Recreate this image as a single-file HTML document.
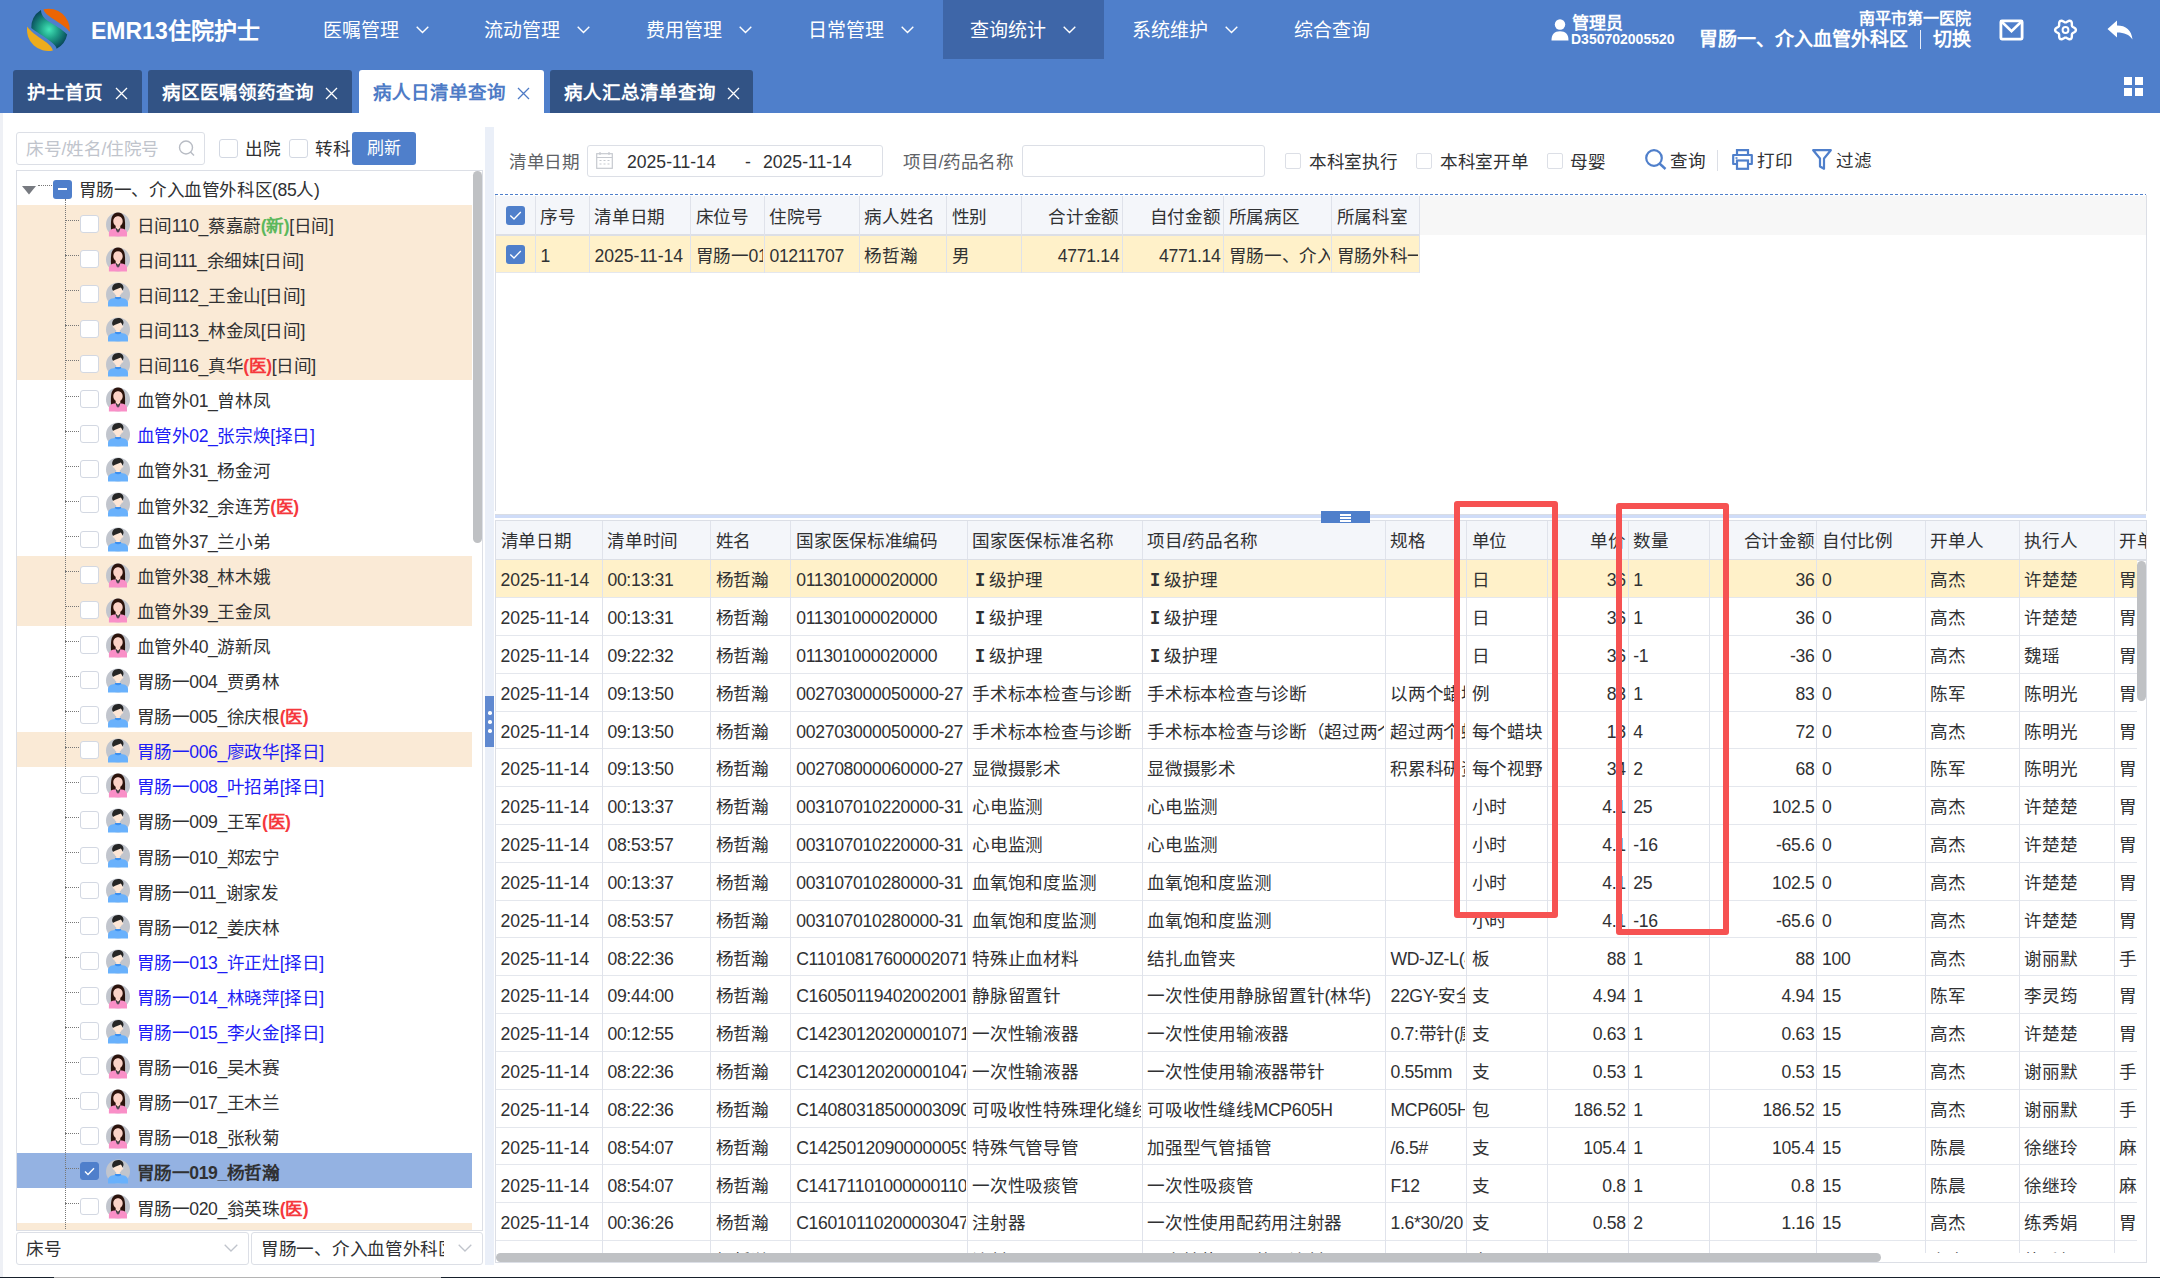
<!DOCTYPE html>
<html lang="zh-CN"><head><meta charset="utf-8"><title>EMR13</title><style>
*{box-sizing:border-box;margin:0;padding:0}
html,body{width:2160px;height:1278px;overflow:hidden;background:#fff}
body{position:relative;font-family:"Liberation Sans",sans-serif;color:#303133}
.a{position:absolute}
.nw{white-space:nowrap}
#top{left:0;top:0;width:2160px;height:113px;background:#4f7fcb}
.mi{top:0;height:58.5px;width:161px;color:#fff;font-size:19px;line-height:62px;padding-left:27px;white-space:nowrap}
.mi svg{position:absolute;top:26px}
.tab{top:70px;height:43px;border-radius:3px 3px 0 0;background:#325385;color:#fff;font-weight:bold;font-size:18.5px;line-height:45px;white-space:nowrap}
.tab .tx{position:absolute;top:0}
.tab svg{position:absolute;top:17px}
.cb{border:1px solid #d3d8e2;border-radius:3px;background:#fff}
.t18{font-size:17.6px;letter-spacing:-0.3px;line-height:22px;white-space:nowrap}
.tr{left:17px;width:455px;height:35.1px}
.tr .hl{position:absolute;left:48px;width:14px;top:15px;height:0;border-top:1px dotted #777;z-index:2}
.tr .cb{position:absolute;left:63px;top:9.8px;width:18.5px;height:17.8px}
.tr svg{position:absolute;left:89px;top:6.5px}
.tr .nm{position:absolute;left:119.5px;top:9.8px;font-size:17.6px;letter-spacing:-0.4px;line-height:23px;white-space:nowrap}
.org{background:#faead6}
.sel{background:#94b2e2}
.bl{color:#1d1df5}
.rd{color:#f5383d;font-weight:bold}
.gr{color:#5cb85c;font-weight:bold}
.cell{position:absolute;top:0;height:100%;overflow:hidden;white-space:nowrap;font-size:18px;padding-left:5px;padding-right:3px;border-right:1px solid #e0e3eb}
.r{text-align:right}
.rn{font-family:"Liberation Mono",monospace;font-weight:bold;font-size:20px;line-height:20px;transform:scaleX(0.85);display:inline-block;width:17px;padding-left:2px;letter-spacing:0}
</style></head>
<body><svg width="0" height="0" style="position:absolute"><defs>
<symbol id="avf" viewBox="0 0 24 25"><circle cx="12" cy="12.5" r="12" fill="#c1c5cd"/>
<path d="M5 18.5 C4.8 13 4.8 8 5.8 5 C7 2 9.5 0.6 12 0.6 C14.5 0.6 17 2 18.2 5 C19.2 8 19.2 13 19 18.5 Z" fill="#2b130c"/>
<path d="M7.3 9.5 C7.3 6.5 9.2 4.3 12 4.3 C14.8 4.3 16.7 6.5 16.7 9.5 C16.7 11.8 15.2 13.2 14.3 13.8 L14.3 17.5 L9.7 17.5 L9.7 13.8 C8.8 13.2 7.3 11.8 7.3 9.5 Z" fill="#fcd3c7"/>
<path d="M2.9 24.5 V21 C2.9 18.8 5 16.8 8 16.6 L10 16.4 L12 19.5 L14 16.4 L16 16.6 C19 16.8 21 18.8 21 21 V24.5 Z" fill="#f98fc7"/>
<path d="M9.6 16.2 L10.4 16 L12 19 L11.2 20.8 Z M14.4 16.2 L13.6 16 L12 19 L12.8 20.8 Z" fill="#2a3437"/></symbol>
<symbol id="avm" viewBox="0 0 24 25"><circle cx="12" cy="12.5" r="12" fill="#c1c5cd"/>
<circle cx="7.8" cy="9.6" r="1.1" fill="#fde6d6"/><circle cx="16.2" cy="9.6" r="1.1" fill="#fde6d6"/>
<path d="M7.8 8.5 C7.8 5.5 9.5 4 12 4 C14.5 4 16.2 5.5 16.2 8.5 C16.2 11.2 14.8 12.8 13.8 13.3 L13.8 15.5 L10.2 15.5 L10.2 13.3 C9.2 12.8 7.8 11.2 7.8 8.5 Z" fill="#fde6d6"/>
<path d="M6.2 7.2 C5.8 3.8 8.3 0.9 12.2 0.9 C15.2 0.9 17.6 2.6 17.5 5.6 C17.4 7 17 7.8 16.4 8.5 C16.1 7.2 15.6 6.2 14.8 5.6 C12.5 6.8 9.6 7.3 7.4 8.8 C6.8 8.4 6.4 7.9 6.2 7.2 Z" fill="#252525"/>
<path d="M2 24.5 V21 C2 18 4.8 16 8.8 15.9 L15.2 15.9 C19.2 16 22 18 22 21 V24.5 Z" fill="#69b1fc"/>
<path d="M8.9 15 L15.1 15 L15.1 16.3 C13.2 17.6 10.8 17.6 8.9 16.3 Z" fill="#3c90f0"/></symbol>
</defs></svg>
<div id="top" class="a"></div><svg class="a" style="left:22px;top:4px" width="54" height="52" viewBox="0 0 54 52">
<defs><radialGradient id="lg" gradientUnits="userSpaceOnUse" cx="27" cy="25.5" r="20"><stop offset="0" stop-color="#44e6b8"/><stop offset="0.45" stop-color="#1fa088"/><stop offset="1" stop-color="#08475a"/></radialGradient></defs>
<path d="M21.6 5.3 A21 21 0 0 1 47.6 27.7 C43 22 34 17 27 12 C23.5 9.5 22 7.5 21.6 5.3 Z" fill="#ec6504"/>
<path d="M5.3 22.4 A21 21 0 0 0 30.9 46.4 C30 43 27 40 21 36 C14 31 8 27 5.3 22.4 Z" fill="#eeac1c"/>
<path d="M18.9 5.9 A21 21 0 0 0 9.3 24 C14 28 22 32 28 37 C32 40 34.5 42.5 34.6 44.8 A21 21 0 0 0 45.2 30.5 C40 25 32 21 26 17 C21.5 14 19 10 18.9 5.9 Z" fill="url(#lg)"/>
</svg><div class="a nw" style="left:91px;top:16px;font-size:23px;line-height:30px;font-weight:bold;color:#fff">EMR13住院护士</div><div class="a mi" style="left:295.5px;">医嘱管理<svg width="13" height="8" viewBox="0 0 13 8" style="left:120px"><path d="M0.7 0.7 L6.5 6.6 L12.3 0.7" fill="none" stroke="#fff" stroke-width="1.4"/></svg></div><div class="a mi" style="left:457.4px;">流动管理<svg width="13" height="8" viewBox="0 0 13 8" style="left:120px"><path d="M0.7 0.7 L6.5 6.6 L12.3 0.7" fill="none" stroke="#fff" stroke-width="1.4"/></svg></div><div class="a mi" style="left:619.3px;">费用管理<svg width="13" height="8" viewBox="0 0 13 8" style="left:120px"><path d="M0.7 0.7 L6.5 6.6 L12.3 0.7" fill="none" stroke="#fff" stroke-width="1.4"/></svg></div><div class="a mi" style="left:781.2px;">日常管理<svg width="13" height="8" viewBox="0 0 13 8" style="left:120px"><path d="M0.7 0.7 L6.5 6.6 L12.3 0.7" fill="none" stroke="#fff" stroke-width="1.4"/></svg></div><div class="a mi" style="left:943.1px;background:#3e66a8;">查询统计<svg width="13" height="8" viewBox="0 0 13 8" style="left:120px"><path d="M0.7 0.7 L6.5 6.6 L12.3 0.7" fill="none" stroke="#fff" stroke-width="1.4"/></svg></div><div class="a mi" style="left:1105.0px;">系统维护<svg width="13" height="8" viewBox="0 0 13 8" style="left:120px"><path d="M0.7 0.7 L6.5 6.6 L12.3 0.7" fill="none" stroke="#fff" stroke-width="1.4"/></svg></div><div class="a mi" style="left:1266.9px;">综合查询</div><svg class="a" style="left:1551px;top:19px" width="18" height="22" viewBox="0 0 18 22"><circle cx="9" cy="5.5" r="5.2" fill="#fff"/><path d="M0.5 21.5 C0.5 15 3.5 12.2 9 12.2 C14.5 12.2 17.5 15 17.5 21.5 Z" fill="#fff"/></svg><div class="a nw" style="left:1572px;top:14px;font-size:17px;line-height:20px;font-weight:bold;color:#fff">管理员</div><div class="a nw" style="left:1571px;top:31px;font-size:14px;line-height:17px;font-weight:bold;color:#fff">D350702005520</div><div class="a nw" style="left:1700px;top:9px;width:271px;text-align:right;font-size:16px;line-height:20px;font-weight:bold;color:#fff">南平市第一医院</div><div class="a nw" style="left:1699px;top:28px;font-size:19px;line-height:23px;font-weight:bold;color:#fff">胃肠一、介入血管外科区</div><div class="a" style="left:1920px;top:30px;width:1px;height:19px;background:#e8eefa"></div><div class="a nw" style="left:1933px;top:28px;font-size:19px;line-height:23px;font-weight:bold;color:#fff">切换</div><svg class="a" style="left:1999px;top:19px" width="25" height="22" viewBox="0 0 25 22"><rect x="1.9" y="1.9" width="21.2" height="18.2" rx="1" fill="none" stroke="#fff" stroke-width="2.8"/><path d="M3 3 L12.5 12.3 L22 3" fill="none" stroke="#fff" stroke-width="2.6"/></svg><svg class="a" style="left:2053px;top:18px" width="25" height="24" viewBox="0 0 25 24"><path d="M22.90 12.00 L22.77 12.67 L22.40 13.30 L21.85 13.86 L21.19 14.33 L20.52 14.72 L19.90 15.07 L19.41 15.41 L19.08 15.80 L18.91 16.28 L18.85 16.88 L18.86 17.58 L18.86 18.36 L18.79 19.17 L18.58 19.93 L18.22 20.56 L17.70 21.01 L17.05 21.23 L16.32 21.23 L15.57 21.03 L14.83 20.69 L14.15 20.30 L13.55 19.94 L13.00 19.69 L12.50 19.60 L12.00 19.69 L11.45 19.94 L10.85 20.30 L10.17 20.69 L9.43 21.03 L8.68 21.23 L7.95 21.23 L7.30 21.01 L6.78 20.56 L6.42 19.93 L6.21 19.17 L6.14 18.36 L6.14 17.58 L6.15 16.88 L6.09 16.28 L5.92 15.80 L5.59 15.41 L5.10 15.07 L4.48 14.72 L3.81 14.33 L3.15 13.86 L2.60 13.30 L2.23 12.67 L2.10 12.00 L2.23 11.33 L2.60 10.70 L3.15 10.14 L3.81 9.67 L4.48 9.28 L5.10 8.93 L5.59 8.59 L5.92 8.20 L6.09 7.72 L6.15 7.12 L6.14 6.42 L6.14 5.64 L6.21 4.83 L6.42 4.07 L6.78 3.44 L7.30 2.99 L7.95 2.77 L8.68 2.77 L9.43 2.97 L10.17 3.31 L10.85 3.70 L11.45 4.06 L12.00 4.31 L12.50 4.40 L13.00 4.31 L13.55 4.06 L14.15 3.70 L14.83 3.31 L15.57 2.97 L16.32 2.77 L17.05 2.77 L17.70 2.99 L18.22 3.44 L18.58 4.07 L18.79 4.83 L18.86 5.64 L18.86 6.42 L18.85 7.12 L18.91 7.72 L19.08 8.20 L19.41 8.59 L19.90 8.93 L20.52 9.28 L21.19 9.67 L21.85 10.14 L22.40 10.70 L22.77 11.33 Z" fill="none" stroke="#fff" stroke-width="2.4" stroke-linejoin="round"/><circle cx="12.5" cy="12" r="2.9" fill="none" stroke="#fff" stroke-width="2"/></svg><svg class="a" style="left:2107px;top:20px" width="26" height="20" viewBox="0 0 26 20"><path d="M0.5 9 L10 0.5 L10 5.5 C19 5.5 24.5 10 25.5 19.5 C22 14.5 17.5 12.5 10 12.5 L10 17.5 Z" fill="#fff"/></svg><div class="a tab" style="left:13.3px;width:128.4px;"><span class="tx" style="left:14px">护士首页</span><svg width="13" height="13" viewBox="0 0 13 13" style="left:102px"><path d="M1 1 L12 12 M12 1 L1 12" stroke="#fff" stroke-width="1.3"/></svg></div><div class="a tab" style="left:148.3px;width:203.4px;"><span class="tx" style="left:13.4px">病区医嘱领药查询</span><svg width="13" height="13" viewBox="0 0 13 13" style="left:177px"><path d="M1 1 L12 12 M12 1 L1 12" stroke="#fff" stroke-width="1.3"/></svg></div><div class="a tab" style="left:359.3px;width:184.7px;background:#fff;color:#4e7bc6;"><span class="tx" style="left:13.4px">病人日清单查询</span><svg width="13" height="13" viewBox="0 0 13 13" style="left:158px"><path d="M1 1 L12 12 M12 1 L1 12" stroke="#4e7bc6" stroke-width="1.3"/></svg></div><div class="a tab" style="left:550px;width:203.3px;"><span class="tx" style="left:14px">病人汇总清单查询</span><svg width="13" height="13" viewBox="0 0 13 13" style="left:177px"><path d="M1 1 L12 12 M12 1 L1 12" stroke="#fff" stroke-width="1.3"/></svg></div><svg class="a" style="left:2124px;top:77px" width="19" height="19" viewBox="0 0 19 19"><rect x="0" y="0" width="8" height="8" fill="#fff"/><rect x="11" y="0" width="8" height="8" fill="#fff"/><rect x="0" y="11" width="8" height="8" fill="#fff"/><rect x="11" y="11" width="8" height="8" fill="#fff"/></svg><div class="a" style="left:0;top:113px;width:3px;height:1165px;background:#eef0f5"></div><div class="a" style="left:16px;top:132px;width:188.5px;height:32.5px;border:1px solid #dcdfe6;border-radius:3px"></div><div class="a t18" style="left:26px;top:138px;color:#c0c4cc">床号/姓名/住院号</div><svg class="a" style="left:178px;top:140px" width="18" height="17" viewBox="0 0 18 17"><circle cx="8" cy="7.5" r="6.5" fill="none" stroke="#b8bcc4" stroke-width="1.4"/><path d="M12.5 12 L16 15.5" stroke="#b8bcc4" stroke-width="1.4"/></svg><div class="a cb" style="left:219px;top:139px;width:19px;height:19px"></div><div class="a t18" style="left:245px;top:138px">出院</div><div class="a cb" style="left:289px;top:139px;width:19px;height:19px"></div><div class="a t18" style="left:315px;top:138px">转科</div><div class="a" style="left:352px;top:132px;width:64px;height:33px;background:#4f7fcb;border-radius:3px;color:#fff;font-size:17px;line-height:33px;text-align:center">刷新</div><div class="a" style="left:16px;top:170px;width:467px;height:1061px;border:1px solid #dcdfe6;overflow:hidden"><svg class="a" style="left:5px;top:15px" width="14" height="9" viewBox="0 0 14 9"><path d="M0 0 L14 0 L7 8.5 Z" fill="#777a80"/></svg><div class="a" style="left:21px;top:14px;width:14px;border-top:1px dotted #777"></div><div class="a" style="left:36px;top:9px;width:19px;height:18.5px;background:#4f7fcb;border-radius:3px"><div class="a" style="left:5px;top:8px;width:9px;height:2px;background:#fff"></div></div><div class="a nw" style="left:61.5px;top:8px;font-size:17.6px;letter-spacing:-0.4px;line-height:23px">胃肠一、介入血管外科区(85人)</div><div class="a" style="left:48px;top:28px;height:1040px;border-left:1px dotted #777;z-index:3"></div><div class="a tr org" style="left:0;top:34.00px"><div class="hl"></div><div class="cb"></div><svg width="24" height="25"><use href="#avf"/></svg><div class="nm" style="">日间110_蔡嘉蔚<span class="gr">(新)</span>[日间]</div></div><div class="a tr org" style="left:0;top:69.10px"><div class="hl"></div><div class="cb"></div><svg width="24" height="25"><use href="#avf"/></svg><div class="nm" style="">日间111_余细妹[日间]</div></div><div class="a tr org" style="left:0;top:104.20px"><div class="hl"></div><div class="cb"></div><svg width="24" height="25"><use href="#avm"/></svg><div class="nm" style="">日间112_王金山[日间]</div></div><div class="a tr org" style="left:0;top:139.30px"><div class="hl"></div><div class="cb"></div><svg width="24" height="25"><use href="#avm"/></svg><div class="nm" style="">日间113_林金凤[日间]</div></div><div class="a tr org" style="left:0;top:174.40px"><div class="hl"></div><div class="cb"></div><svg width="24" height="25"><use href="#avm"/></svg><div class="nm" style="">日间116_真华<span class="rd">(医)</span>[日间]</div></div><div class="a tr " style="left:0;top:209.50px"><div class="hl"></div><div class="cb"></div><svg width="24" height="25"><use href="#avf"/></svg><div class="nm" style="">血管外01_曾林凤</div></div><div class="a tr " style="left:0;top:244.60px"><div class="hl"></div><div class="cb"></div><svg width="24" height="25"><use href="#avm"/></svg><div class="nm" style=""><span class="bl">血管外02_张宗焕[择日]</span></div></div><div class="a tr " style="left:0;top:279.70px"><div class="hl"></div><div class="cb"></div><svg width="24" height="25"><use href="#avm"/></svg><div class="nm" style="">血管外31_杨金河</div></div><div class="a tr " style="left:0;top:314.80px"><div class="hl"></div><div class="cb"></div><svg width="24" height="25"><use href="#avm"/></svg><div class="nm" style="">血管外32_余连芳<span class="rd">(医)</span></div></div><div class="a tr " style="left:0;top:349.90px"><div class="hl"></div><div class="cb"></div><svg width="24" height="25"><use href="#avm"/></svg><div class="nm" style="">血管外37_兰小弟</div></div><div class="a tr org" style="left:0;top:385.00px"><div class="hl"></div><div class="cb"></div><svg width="24" height="25"><use href="#avf"/></svg><div class="nm" style="">血管外38_林木娥</div></div><div class="a tr org" style="left:0;top:420.10px"><div class="hl"></div><div class="cb"></div><svg width="24" height="25"><use href="#avf"/></svg><div class="nm" style="">血管外39_王金凤</div></div><div class="a tr " style="left:0;top:455.20px"><div class="hl"></div><div class="cb"></div><svg width="24" height="25"><use href="#avf"/></svg><div class="nm" style="">血管外40_游新凤</div></div><div class="a tr " style="left:0;top:490.30px"><div class="hl"></div><div class="cb"></div><svg width="24" height="25"><use href="#avm"/></svg><div class="nm" style="">胃肠一004_贾勇林</div></div><div class="a tr " style="left:0;top:525.40px"><div class="hl"></div><div class="cb"></div><svg width="24" height="25"><use href="#avm"/></svg><div class="nm" style="">胃肠一005_徐庆根<span class="rd">(医)</span></div></div><div class="a tr org" style="left:0;top:560.50px"><div class="hl"></div><div class="cb"></div><svg width="24" height="25"><use href="#avm"/></svg><div class="nm" style=""><span class="bl">胃肠一006_廖政华[择日]</span></div></div><div class="a tr " style="left:0;top:595.60px"><div class="hl"></div><div class="cb"></div><svg width="24" height="25"><use href="#avf"/></svg><div class="nm" style=""><span class="bl">胃肠一008_叶招弟[择日]</span></div></div><div class="a tr " style="left:0;top:630.70px"><div class="hl"></div><div class="cb"></div><svg width="24" height="25"><use href="#avm"/></svg><div class="nm" style="">胃肠一009_王军<span class="rd">(医)</span></div></div><div class="a tr " style="left:0;top:665.80px"><div class="hl"></div><div class="cb"></div><svg width="24" height="25"><use href="#avm"/></svg><div class="nm" style="">胃肠一010_郑宏宁</div></div><div class="a tr " style="left:0;top:700.90px"><div class="hl"></div><div class="cb"></div><svg width="24" height="25"><use href="#avm"/></svg><div class="nm" style="">胃肠一011_谢家发</div></div><div class="a tr " style="left:0;top:736.00px"><div class="hl"></div><div class="cb"></div><svg width="24" height="25"><use href="#avm"/></svg><div class="nm" style="">胃肠一012_姜庆林</div></div><div class="a tr " style="left:0;top:771.10px"><div class="hl"></div><div class="cb"></div><svg width="24" height="25"><use href="#avm"/></svg><div class="nm" style=""><span class="bl">胃肠一013_许正灶[择日]</span></div></div><div class="a tr " style="left:0;top:806.20px"><div class="hl"></div><div class="cb"></div><svg width="24" height="25"><use href="#avf"/></svg><div class="nm" style=""><span class="bl">胃肠一014_林晓萍[择日]</span></div></div><div class="a tr " style="left:0;top:841.30px"><div class="hl"></div><div class="cb"></div><svg width="24" height="25"><use href="#avm"/></svg><div class="nm" style=""><span class="bl">胃肠一015_李火金[择日]</span></div></div><div class="a tr " style="left:0;top:876.40px"><div class="hl"></div><div class="cb"></div><svg width="24" height="25"><use href="#avf"/></svg><div class="nm" style="">胃肠一016_吴木赛</div></div><div class="a tr " style="left:0;top:911.50px"><div class="hl"></div><div class="cb"></div><svg width="24" height="25"><use href="#avf"/></svg><div class="nm" style="">胃肠一017_王木兰</div></div><div class="a tr " style="left:0;top:946.60px"><div class="hl"></div><div class="cb"></div><svg width="24" height="25"><use href="#avf"/></svg><div class="nm" style="">胃肠一018_张秋菊</div></div><div class="a tr sel" style="left:0;top:981.70px"><div class="hl"></div><div class="cb" style="background:#4f7fcb;border-color:#4f7fcb"><svg style="position:absolute;left:3px;top:4px" width="11" height="9" viewBox="0 0 11 9"><path d="M1 4.5 L4 7.5 L10 1.2" fill="none" stroke="#fff" stroke-width="1.4"/></svg></div><svg width="24" height="25"><use href="#avm"/></svg><div class="nm" style="font-weight:bold;">胃肠一019_杨哲瀚</div></div><div class="a tr " style="left:0;top:1016.80px"><div class="hl"></div><div class="cb"></div><svg width="24" height="25"><use href="#avf"/></svg><div class="nm" style="">胃肠一020_翁英珠<span class="rd">(医)</span></div></div><div class="a tr org" style="left:0;top:1051.90px"></div><div class="a" style="left:456px;top:0px;width:9px;height:372px;background:#bfc1c4;border-radius:5px"></div></div><div class="a" style="left:16px;top:1232px;width:233px;height:33px;border:1px solid #dcdfe6;border-radius:3px"></div><div class="a t18" style="left:26px;top:1238px">床号</div><svg class="a" style="left:224px;top:1244px" width="14" height="8" viewBox="0 0 14 8"><path d="M0.7 0.7 L7 7 L13.3 0.7" fill="none" stroke="#c0c4cc" stroke-width="1.3"/></svg><div class="a" style="left:251px;top:1232px;width:232px;height:33px;border:1px solid #dcdfe6;border-radius:3px"></div><div class="a t18" style="left:261px;top:1238px;width:183px;overflow:hidden">胃肠一、介入血管外科区</div><svg class="a" style="left:458px;top:1244px" width="14" height="8" viewBox="0 0 14 8"><path d="M0.7 0.7 L7 7 L13.3 0.7" fill="none" stroke="#c0c4cc" stroke-width="1.3"/></svg><div class="a" style="left:485px;top:127px;width:9px;height:1138px;background:#eaeff8"></div><div class="a" style="left:485px;top:696px;width:9px;height:51px;background:#6089d0"><div class="a" style="left:3px;top:15px;width:3.5px;height:3.5px;border-radius:50%;background:#fff"></div><div class="a" style="left:3px;top:24px;width:3.5px;height:3.5px;border-radius:50%;background:#fff"></div><div class="a" style="left:3px;top:33px;width:3.5px;height:3.5px;border-radius:50%;background:#fff"></div></div><div class="a t18" style="left:509px;top:151px;color:#606266">清单日期</div><div class="a" style="left:587px;top:144.5px;width:295.5px;height:32px;border:1px solid #dcdfe6;border-radius:3px"></div><svg class="a" style="left:596px;top:152px" width="17" height="17" viewBox="0 0 17 17"><rect x="0.7" y="1.7" width="15.6" height="14.6" fill="none" stroke="#c6c9cf" stroke-width="1.2"/><path d="M0.7 5.5 H16.3 M4 0 V3 M13 0 V3" stroke="#c6c9cf" stroke-width="1.2"/><path d="M3.5 8.5h2M7.5 8.5h2M11.5 8.5h2M3.5 12h2M7.5 12h2M11.5 12h2" stroke="#c6c9cf" stroke-width="1.2"/></svg><div class="a t18" style="left:627px;top:151px;letter-spacing:0">2025-11-14</div><div class="a t18" style="left:745px;top:151px">-</div><div class="a t18" style="left:763px;top:151px;letter-spacing:0">2025-11-14</div><div class="a t18" style="left:903px;top:151px;color:#606266">项目/药品名称</div><div class="a" style="left:1022px;top:144.5px;width:242.5px;height:32px;border:1px solid #dcdfe6;border-radius:3px"></div><div class="a cb" style="left:1285px;top:153px;width:16px;height:16px;border-color:#dcdfe6;border-radius:2px"></div><div class="a t18" style="left:1309px;top:151px">本科室执行</div><div class="a cb" style="left:1416px;top:153px;width:16px;height:16px;border-color:#dcdfe6;border-radius:2px"></div><div class="a t18" style="left:1440px;top:151px">本科室开单</div><div class="a cb" style="left:1547px;top:153px;width:16px;height:16px;border-color:#dcdfe6;border-radius:2px"></div><div class="a t18" style="left:1570px;top:151px">母婴</div><svg class="a" style="left:1645px;top:149px" width="22" height="21" viewBox="0 0 22 21"><circle cx="9" cy="9" r="7.8" fill="none" stroke="#4f7fcb" stroke-width="2.2"/><path d="M14.5 14.5 L20.5 20" stroke="#4f7fcb" stroke-width="2.4"/></svg><div class="a t18" style="left:1670px;top:150px">查询</div><div class="a" style="left:1717px;top:150px;width:1px;height:21px;background:#dcdfe6"></div><svg class="a" style="left:1732px;top:149px" width="21" height="21" viewBox="0 0 21 21"><path d="M5 6 V1.2 H16 V6" fill="none" stroke="#4f7fcb" stroke-width="2.2"/><path d="M5 15 H1.2 V6 H19.8 V15 H16" fill="none" stroke="#4f7fcb" stroke-width="2.2" stroke-linejoin="round"/><rect x="5" y="11.5" width="11" height="8.3" fill="none" stroke="#4f7fcb" stroke-width="2.2"/><rect x="3.5" y="8.2" width="2" height="1.6" fill="#4f7fcb"/></svg><div class="a t18" style="left:1757px;top:150px">打印</div><svg class="a" style="left:1812px;top:149px" width="20" height="21" viewBox="0 0 20 21"><path d="M1.2 1.2 H18.8 L12 9.5 V19.8 L8 17.5 V9.5 Z" fill="none" stroke="#4f7fcb" stroke-width="2.2" stroke-linejoin="round"/></svg><div class="a t18" style="left:1836px;top:150px">过滤</div><div class="a" style="left:495px;top:193.5px;width:1651px;height:1.5px;background:repeating-linear-gradient(90deg,#4f7fcb 0 3px,transparent 3px 5px)"></div><div class="a" style="left:495px;top:195px;width:1px;height:316px;background:#dcdfe6"></div><div class="a" style="left:2145.5px;top:195px;width:1px;height:316px;background:#dcdfe6"></div><div class="a" style="left:496px;top:195.5px;width:1650px;height:39px;background:#f7f7f7"></div><div class="a" style="left:496px;top:195.5px;width:923.2px;height:38.5px;background:#f4f6fa"></div><div class="a" style="left:496px;top:234px;width:923.2px;height:2px;background:#dcdfe6"></div><div class="a" style="left:496px;top:236px;width:923.2px;height:35.5px;background:#fff1c9"></div><div class="a" style="left:496px;top:271.5px;width:923.2px;height:1px;background:#e4e7ed"></div><div class="a" style="left:535.0px;top:195.5px;width:1px;height:77px;background:#dfe2ea"></div><div class="a" style="left:506px;top:206px;width:19px;height:19px;background:#4f7fcb;border-radius:3px"><svg style="position:absolute;left:3px;top:4px" width="13" height="11" viewBox="0 0 13 11"><path d="M1.3 5.5 L5 9 L11.8 2" fill="none" stroke="#fff" stroke-width="1.3"/></svg></div><div class="a" style="left:506px;top:245px;width:19px;height:19px;background:#4f7fcb;border-radius:3px"><svg style="position:absolute;left:3px;top:4px" width="13" height="11" viewBox="0 0 13 11"><path d="M1.3 5.5 L5 9 L11.8 2" fill="none" stroke="#fff" stroke-width="1.3"/></svg></div><div class="a" style="left:589.0px;top:195.5px;width:1px;height:77px;background:#dfe2ea"></div><div class="a nw" style="left:535.4px;top:205.5px;width:53.0px;padding-left:5px;font-size:17.6px;letter-spacing:-0.3px;line-height:22px;overflow:hidden">序号</div><div class="a nw" style="left:535.4px;top:244.7px;width:53.0px;padding-left:5px;font-size:17.6px;letter-spacing:-0.3px;line-height:22px;overflow:hidden">1</div><div class="a" style="left:690.1px;top:195.5px;width:1px;height:77px;background:#dfe2ea"></div><div class="a nw" style="left:589.4px;top:205.5px;width:100.1px;padding-left:5px;font-size:17.6px;letter-spacing:-0.3px;line-height:22px;overflow:hidden">清单日期</div><div class="a nw" style="left:589.4px;top:244.7px;width:100.1px;padding-left:5px;font-size:17.6px;letter-spacing:0;line-height:22px;overflow:hidden">2025-11-14</div><div class="a" style="left:764.0px;top:195.5px;width:1px;height:77px;background:#dfe2ea"></div><div class="a nw" style="left:690.5px;top:205.5px;width:72.9px;padding-left:5px;font-size:17.6px;letter-spacing:-0.3px;line-height:22px;overflow:hidden">床位号</div><div class="a nw" style="left:690.5px;top:244.7px;width:72.9px;padding-left:5px;font-size:17.6px;letter-spacing:-0.3px;line-height:22px;overflow:hidden">胃肠一01</div><div class="a" style="left:859.0px;top:195.5px;width:1px;height:77px;background:#dfe2ea"></div><div class="a nw" style="left:764.4px;top:205.5px;width:94.0px;padding-left:5px;font-size:17.6px;letter-spacing:-0.3px;line-height:22px;overflow:hidden">住院号</div><div class="a nw" style="left:764.4px;top:244.7px;width:94.0px;padding-left:5px;font-size:17.6px;letter-spacing:-0.3px;line-height:22px;overflow:hidden">01211707</div><div class="a" style="left:946.1px;top:195.5px;width:1px;height:77px;background:#dfe2ea"></div><div class="a nw" style="left:859.4px;top:205.5px;width:86.1px;padding-left:5px;font-size:17.6px;letter-spacing:-0.3px;line-height:22px;overflow:hidden">病人姓名</div><div class="a nw" style="left:859.4px;top:244.7px;width:86.1px;padding-left:5px;font-size:17.6px;letter-spacing:-0.3px;line-height:22px;overflow:hidden">杨哲瀚</div><div class="a" style="left:1020.9px;top:195.5px;width:1px;height:77px;background:#dfe2ea"></div><div class="a nw" style="left:946.5px;top:205.5px;width:73.8px;padding-left:5px;font-size:17.6px;letter-spacing:-0.3px;line-height:22px;overflow:hidden">性别</div><div class="a nw" style="left:946.5px;top:244.7px;width:73.8px;padding-left:5px;font-size:17.6px;letter-spacing:-0.3px;line-height:22px;overflow:hidden">男</div><div class="a" style="left:1121.8px;top:195.5px;width:1px;height:77px;background:#dfe2ea"></div><div class="a nw" style="left:1021.3px;top:205.5px;width:99.9px;padding-left:5px;text-align:right;padding-right:2px;font-size:17.6px;letter-spacing:-0.3px;line-height:22px;overflow:hidden">合计金额</div><div class="a nw" style="left:1021.3px;top:244.7px;width:99.9px;padding-left:5px;text-align:right;padding-right:2px;font-size:17.6px;letter-spacing:-0.3px;line-height:22px;overflow:hidden">4771.14</div><div class="a" style="left:1223.2px;top:195.5px;width:1px;height:77px;background:#dfe2ea"></div><div class="a nw" style="left:1122.2px;top:205.5px;width:100.4px;padding-left:5px;text-align:right;padding-right:2px;font-size:17.6px;letter-spacing:-0.3px;line-height:22px;overflow:hidden">自付金额</div><div class="a nw" style="left:1122.2px;top:244.7px;width:100.4px;padding-left:5px;text-align:right;padding-right:2px;font-size:17.6px;letter-spacing:-0.3px;line-height:22px;overflow:hidden">4771.14</div><div class="a" style="left:1331.1px;top:195.5px;width:1px;height:77px;background:#dfe2ea"></div><div class="a nw" style="left:1223.6px;top:205.5px;width:106.9px;padding-left:5px;font-size:17.6px;letter-spacing:-0.3px;line-height:22px;overflow:hidden">所属病区</div><div class="a nw" style="left:1223.6px;top:244.7px;width:106.9px;padding-left:5px;font-size:17.6px;letter-spacing:-0.3px;line-height:22px;overflow:hidden">胃肠一、介入</div><div class="a" style="left:1418.8px;top:195.5px;width:1px;height:77px;background:#dfe2ea"></div><div class="a nw" style="left:1331.5px;top:205.5px;width:86.7px;padding-left:5px;font-size:17.6px;letter-spacing:-0.3px;line-height:22px;overflow:hidden">所属科室</div><div class="a nw" style="left:1331.5px;top:244.7px;width:86.7px;padding-left:5px;font-size:17.6px;letter-spacing:-0.3px;line-height:22px;overflow:hidden">胃肠外科一</div><div class="a" style="left:495px;top:514px;width:1651px;height:1px;background:#d9dde5"></div><div class="a" style="left:495px;top:515px;width:1651px;height:3px;background:#cfdcf8"></div><div class="a" style="left:1321px;top:511px;width:49px;height:12px;background:#4f7fcb;z-index:5"><div class="a" style="left:19px;top:3px;width:11px;height:1.5px;background:#fff"></div><div class="a" style="left:19px;top:6px;width:11px;height:1.5px;background:#fff"></div><div class="a" style="left:19px;top:9px;width:11px;height:1.5px;background:#fff"></div></div><div class="a" style="left:495px;top:520px;width:1651.5px;height:743px;border:1px solid #dcdfe6;overflow:hidden"><div class="a" style="left:0;top:0;width:1650px;height:38px;background:#f4f6fa"></div><div class="a" style="left:0;top:38px;width:1650px;height:2px;background:#dcdfe6"></div><div class="a" style="left:0;top:39.3px;width:1641px;height:692.7px;overflow:hidden"><div class="a" style="left:0;top:0.00px;width:1641px;height:37.82px;background:#fff1c9;border-bottom:1px solid #e4e7ed"></div><div class="a" style="left:0;top:37.82px;width:1641px;height:37.82px;background:#fff;border-bottom:1px solid #e4e7ed"></div><div class="a" style="left:0;top:75.64px;width:1641px;height:37.82px;background:#fff;border-bottom:1px solid #e4e7ed"></div><div class="a" style="left:0;top:113.46px;width:1641px;height:37.82px;background:#fff;border-bottom:1px solid #e4e7ed"></div><div class="a" style="left:0;top:151.28px;width:1641px;height:37.82px;background:#fff;border-bottom:1px solid #e4e7ed"></div><div class="a" style="left:0;top:189.10px;width:1641px;height:37.82px;background:#fff;border-bottom:1px solid #e4e7ed"></div><div class="a" style="left:0;top:226.92px;width:1641px;height:37.82px;background:#fff;border-bottom:1px solid #e4e7ed"></div><div class="a" style="left:0;top:264.74px;width:1641px;height:37.82px;background:#fff;border-bottom:1px solid #e4e7ed"></div><div class="a" style="left:0;top:302.56px;width:1641px;height:37.82px;background:#fff;border-bottom:1px solid #e4e7ed"></div><div class="a" style="left:0;top:340.38px;width:1641px;height:37.82px;background:#fff;border-bottom:1px solid #e4e7ed"></div><div class="a" style="left:0;top:378.20px;width:1641px;height:37.82px;background:#fff;border-bottom:1px solid #e4e7ed"></div><div class="a" style="left:0;top:416.02px;width:1641px;height:37.82px;background:#fff;border-bottom:1px solid #e4e7ed"></div><div class="a" style="left:0;top:453.84px;width:1641px;height:37.82px;background:#fff;border-bottom:1px solid #e4e7ed"></div><div class="a" style="left:0;top:491.66px;width:1641px;height:37.82px;background:#fff;border-bottom:1px solid #e4e7ed"></div><div class="a" style="left:0;top:529.48px;width:1641px;height:37.82px;background:#fff;border-bottom:1px solid #e4e7ed"></div><div class="a" style="left:0;top:567.30px;width:1641px;height:37.82px;background:#fff;border-bottom:1px solid #e4e7ed"></div><div class="a" style="left:0;top:605.12px;width:1641px;height:37.82px;background:#fff;border-bottom:1px solid #e4e7ed"></div><div class="a" style="left:0;top:642.94px;width:1641px;height:37.82px;background:#fff;border-bottom:1px solid #e4e7ed"></div><div class="a" style="left:0;top:680.76px;width:1641px;height:37.82px;background:#fff;border-bottom:1px solid #e4e7ed"></div><div class="a" style="left:105.6px;top:0;width:1px;height:700px;background:#e0e3eb"></div><div class="a" style="left:213.8px;top:0;width:1px;height:700px;background:#e0e3eb"></div><div class="a" style="left:294.4px;top:0;width:1px;height:700px;background:#e0e3eb"></div><div class="a" style="left:470.6px;top:0;width:1px;height:700px;background:#e0e3eb"></div><div class="a" style="left:645.6px;top:0;width:1px;height:700px;background:#e0e3eb"></div><div class="a" style="left:888.6px;top:0;width:1px;height:700px;background:#e0e3eb"></div><div class="a" style="left:969.7px;top:0;width:1px;height:700px;background:#e0e3eb"></div><div class="a" style="left:1051.0px;top:0;width:1px;height:700px;background:#e0e3eb"></div><div class="a" style="left:1131.5px;top:0;width:1px;height:700px;background:#e0e3eb"></div><div class="a" style="left:1212.5px;top:0;width:1px;height:700px;background:#e0e3eb"></div><div class="a" style="left:1320.2px;top:0;width:1px;height:700px;background:#e0e3eb"></div><div class="a" style="left:1428.5px;top:0;width:1px;height:700px;background:#e0e3eb"></div><div class="a" style="left:1522.6px;top:0;width:1px;height:700px;background:#e0e3eb"></div><div class="a" style="left:1617.5px;top:0;width:1px;height:700px;background:#e0e3eb"></div><div class="a" style="left:1743.2px;top:0;width:1px;height:700px;background:#e0e3eb"></div><div class="a nw" style="left:-0.5px;top:9.10px;width:105.9px;padding-left:5px;font-size:17.6px;letter-spacing:0;line-height:22px;overflow:hidden">2025-11-14</div><div class="a nw" style="left:106.4px;top:9.10px;width:107.2px;padding-left:5px;font-size:17.6px;letter-spacing:-0.3px;line-height:22px;overflow:hidden">00:13:31</div><div class="a nw" style="left:214.6px;top:9.10px;width:79.6px;padding-left:5px;font-size:17.6px;letter-spacing:-0.3px;line-height:22px;overflow:hidden">杨哲瀚</div><div class="a nw" style="left:295.2px;top:9.10px;width:175.2px;padding-left:5px;font-size:17.6px;letter-spacing:-0.3px;line-height:22px;overflow:hidden">011301000020000</div><div class="a nw" style="left:471.4px;top:9.10px;width:174.0px;padding-left:5px;font-size:17.6px;letter-spacing:-0.3px;line-height:22px;overflow:hidden"><b class="rn">I</b>级护理</div><div class="a nw" style="left:646.4px;top:9.10px;width:242.0px;padding-left:5px;font-size:17.6px;letter-spacing:-0.3px;line-height:22px;overflow:hidden"><b class="rn">I</b>级护理</div><div class="a nw" style="left:889.4px;top:9.10px;width:80.1px;padding-left:5px;font-size:17.6px;letter-spacing:-0.3px;line-height:22px;overflow:hidden"></div><div class="a nw" style="left:970.5px;top:9.10px;width:80.3px;padding-left:5px;font-size:17.6px;letter-spacing:-0.3px;line-height:22px;overflow:hidden">日</div><div class="a nw" style="left:1051.8px;top:9.10px;width:79.5px;padding-left:5px;text-align:right;padding-right:1.5px;font-size:17.6px;letter-spacing:-0.3px;line-height:22px;overflow:hidden">36</div><div class="a nw" style="left:1132.3px;top:9.10px;width:80.0px;padding-left:5px;font-size:17.6px;letter-spacing:-0.3px;line-height:22px;overflow:hidden">1</div><div class="a nw" style="left:1213.3px;top:9.10px;width:106.7px;padding-left:5px;text-align:right;padding-right:1.5px;font-size:17.6px;letter-spacing:-0.3px;line-height:22px;overflow:hidden">36</div><div class="a nw" style="left:1321.0px;top:9.10px;width:107.3px;padding-left:5px;font-size:17.6px;letter-spacing:-0.3px;line-height:22px;overflow:hidden">0</div><div class="a nw" style="left:1429.3px;top:9.10px;width:93.1px;padding-left:5px;font-size:17.6px;letter-spacing:-0.3px;line-height:22px;overflow:hidden">高杰</div><div class="a nw" style="left:1523.4px;top:9.10px;width:93.9px;padding-left:5px;font-size:17.6px;letter-spacing:-0.3px;line-height:22px;overflow:hidden">许楚楚</div><div class="a nw" style="left:1618.3px;top:9.10px;width:124.7px;padding-left:5px;font-size:17.6px;letter-spacing:-0.3px;line-height:22px;overflow:hidden">胃</div><div class="a nw" style="left:-0.5px;top:46.92px;width:105.9px;padding-left:5px;font-size:17.6px;letter-spacing:0;line-height:22px;overflow:hidden">2025-11-14</div><div class="a nw" style="left:106.4px;top:46.92px;width:107.2px;padding-left:5px;font-size:17.6px;letter-spacing:-0.3px;line-height:22px;overflow:hidden">00:13:31</div><div class="a nw" style="left:214.6px;top:46.92px;width:79.6px;padding-left:5px;font-size:17.6px;letter-spacing:-0.3px;line-height:22px;overflow:hidden">杨哲瀚</div><div class="a nw" style="left:295.2px;top:46.92px;width:175.2px;padding-left:5px;font-size:17.6px;letter-spacing:-0.3px;line-height:22px;overflow:hidden">011301000020000</div><div class="a nw" style="left:471.4px;top:46.92px;width:174.0px;padding-left:5px;font-size:17.6px;letter-spacing:-0.3px;line-height:22px;overflow:hidden"><b class="rn">I</b>级护理</div><div class="a nw" style="left:646.4px;top:46.92px;width:242.0px;padding-left:5px;font-size:17.6px;letter-spacing:-0.3px;line-height:22px;overflow:hidden"><b class="rn">I</b>级护理</div><div class="a nw" style="left:889.4px;top:46.92px;width:80.1px;padding-left:5px;font-size:17.6px;letter-spacing:-0.3px;line-height:22px;overflow:hidden"></div><div class="a nw" style="left:970.5px;top:46.92px;width:80.3px;padding-left:5px;font-size:17.6px;letter-spacing:-0.3px;line-height:22px;overflow:hidden">日</div><div class="a nw" style="left:1051.8px;top:46.92px;width:79.5px;padding-left:5px;text-align:right;padding-right:1.5px;font-size:17.6px;letter-spacing:-0.3px;line-height:22px;overflow:hidden">36</div><div class="a nw" style="left:1132.3px;top:46.92px;width:80.0px;padding-left:5px;font-size:17.6px;letter-spacing:-0.3px;line-height:22px;overflow:hidden">1</div><div class="a nw" style="left:1213.3px;top:46.92px;width:106.7px;padding-left:5px;text-align:right;padding-right:1.5px;font-size:17.6px;letter-spacing:-0.3px;line-height:22px;overflow:hidden">36</div><div class="a nw" style="left:1321.0px;top:46.92px;width:107.3px;padding-left:5px;font-size:17.6px;letter-spacing:-0.3px;line-height:22px;overflow:hidden">0</div><div class="a nw" style="left:1429.3px;top:46.92px;width:93.1px;padding-left:5px;font-size:17.6px;letter-spacing:-0.3px;line-height:22px;overflow:hidden">高杰</div><div class="a nw" style="left:1523.4px;top:46.92px;width:93.9px;padding-left:5px;font-size:17.6px;letter-spacing:-0.3px;line-height:22px;overflow:hidden">许楚楚</div><div class="a nw" style="left:1618.3px;top:46.92px;width:124.7px;padding-left:5px;font-size:17.6px;letter-spacing:-0.3px;line-height:22px;overflow:hidden">胃</div><div class="a nw" style="left:-0.5px;top:84.74px;width:105.9px;padding-left:5px;font-size:17.6px;letter-spacing:0;line-height:22px;overflow:hidden">2025-11-14</div><div class="a nw" style="left:106.4px;top:84.74px;width:107.2px;padding-left:5px;font-size:17.6px;letter-spacing:-0.3px;line-height:22px;overflow:hidden">09:22:32</div><div class="a nw" style="left:214.6px;top:84.74px;width:79.6px;padding-left:5px;font-size:17.6px;letter-spacing:-0.3px;line-height:22px;overflow:hidden">杨哲瀚</div><div class="a nw" style="left:295.2px;top:84.74px;width:175.2px;padding-left:5px;font-size:17.6px;letter-spacing:-0.3px;line-height:22px;overflow:hidden">011301000020000</div><div class="a nw" style="left:471.4px;top:84.74px;width:174.0px;padding-left:5px;font-size:17.6px;letter-spacing:-0.3px;line-height:22px;overflow:hidden"><b class="rn">I</b>级护理</div><div class="a nw" style="left:646.4px;top:84.74px;width:242.0px;padding-left:5px;font-size:17.6px;letter-spacing:-0.3px;line-height:22px;overflow:hidden"><b class="rn">I</b>级护理</div><div class="a nw" style="left:889.4px;top:84.74px;width:80.1px;padding-left:5px;font-size:17.6px;letter-spacing:-0.3px;line-height:22px;overflow:hidden"></div><div class="a nw" style="left:970.5px;top:84.74px;width:80.3px;padding-left:5px;font-size:17.6px;letter-spacing:-0.3px;line-height:22px;overflow:hidden">日</div><div class="a nw" style="left:1051.8px;top:84.74px;width:79.5px;padding-left:5px;text-align:right;padding-right:1.5px;font-size:17.6px;letter-spacing:-0.3px;line-height:22px;overflow:hidden">36</div><div class="a nw" style="left:1132.3px;top:84.74px;width:80.0px;padding-left:5px;font-size:17.6px;letter-spacing:-0.3px;line-height:22px;overflow:hidden">-1</div><div class="a nw" style="left:1213.3px;top:84.74px;width:106.7px;padding-left:5px;text-align:right;padding-right:1.5px;font-size:17.6px;letter-spacing:-0.3px;line-height:22px;overflow:hidden">-36</div><div class="a nw" style="left:1321.0px;top:84.74px;width:107.3px;padding-left:5px;font-size:17.6px;letter-spacing:-0.3px;line-height:22px;overflow:hidden">0</div><div class="a nw" style="left:1429.3px;top:84.74px;width:93.1px;padding-left:5px;font-size:17.6px;letter-spacing:-0.3px;line-height:22px;overflow:hidden">高杰</div><div class="a nw" style="left:1523.4px;top:84.74px;width:93.9px;padding-left:5px;font-size:17.6px;letter-spacing:-0.3px;line-height:22px;overflow:hidden">魏瑶</div><div class="a nw" style="left:1618.3px;top:84.74px;width:124.7px;padding-left:5px;font-size:17.6px;letter-spacing:-0.3px;line-height:22px;overflow:hidden">胃</div><div class="a nw" style="left:-0.5px;top:122.56px;width:105.9px;padding-left:5px;font-size:17.6px;letter-spacing:0;line-height:22px;overflow:hidden">2025-11-14</div><div class="a nw" style="left:106.4px;top:122.56px;width:107.2px;padding-left:5px;font-size:17.6px;letter-spacing:-0.3px;line-height:22px;overflow:hidden">09:13:50</div><div class="a nw" style="left:214.6px;top:122.56px;width:79.6px;padding-left:5px;font-size:17.6px;letter-spacing:-0.3px;line-height:22px;overflow:hidden">杨哲瀚</div><div class="a nw" style="left:295.2px;top:122.56px;width:175.2px;padding-left:5px;font-size:17.6px;letter-spacing:-0.3px;line-height:22px;overflow:hidden">002703000050000-27</div><div class="a nw" style="left:471.4px;top:122.56px;width:174.0px;padding-left:5px;font-size:17.6px;letter-spacing:-0.3px;line-height:22px;overflow:hidden">手术标本检查与诊断</div><div class="a nw" style="left:646.4px;top:122.56px;width:242.0px;padding-left:5px;font-size:17.6px;letter-spacing:-0.3px;line-height:22px;overflow:hidden">手术标本检查与诊断</div><div class="a nw" style="left:889.4px;top:122.56px;width:80.1px;padding-left:5px;font-size:17.6px;letter-spacing:-0.3px;line-height:22px;overflow:hidden">以两个蜡块</div><div class="a nw" style="left:970.5px;top:122.56px;width:80.3px;padding-left:5px;font-size:17.6px;letter-spacing:-0.3px;line-height:22px;overflow:hidden">例</div><div class="a nw" style="left:1051.8px;top:122.56px;width:79.5px;padding-left:5px;text-align:right;padding-right:1.5px;font-size:17.6px;letter-spacing:-0.3px;line-height:22px;overflow:hidden">83</div><div class="a nw" style="left:1132.3px;top:122.56px;width:80.0px;padding-left:5px;font-size:17.6px;letter-spacing:-0.3px;line-height:22px;overflow:hidden">1</div><div class="a nw" style="left:1213.3px;top:122.56px;width:106.7px;padding-left:5px;text-align:right;padding-right:1.5px;font-size:17.6px;letter-spacing:-0.3px;line-height:22px;overflow:hidden">83</div><div class="a nw" style="left:1321.0px;top:122.56px;width:107.3px;padding-left:5px;font-size:17.6px;letter-spacing:-0.3px;line-height:22px;overflow:hidden">0</div><div class="a nw" style="left:1429.3px;top:122.56px;width:93.1px;padding-left:5px;font-size:17.6px;letter-spacing:-0.3px;line-height:22px;overflow:hidden">陈军</div><div class="a nw" style="left:1523.4px;top:122.56px;width:93.9px;padding-left:5px;font-size:17.6px;letter-spacing:-0.3px;line-height:22px;overflow:hidden">陈明光</div><div class="a nw" style="left:1618.3px;top:122.56px;width:124.7px;padding-left:5px;font-size:17.6px;letter-spacing:-0.3px;line-height:22px;overflow:hidden">胃</div><div class="a nw" style="left:-0.5px;top:160.38px;width:105.9px;padding-left:5px;font-size:17.6px;letter-spacing:0;line-height:22px;overflow:hidden">2025-11-14</div><div class="a nw" style="left:106.4px;top:160.38px;width:107.2px;padding-left:5px;font-size:17.6px;letter-spacing:-0.3px;line-height:22px;overflow:hidden">09:13:50</div><div class="a nw" style="left:214.6px;top:160.38px;width:79.6px;padding-left:5px;font-size:17.6px;letter-spacing:-0.3px;line-height:22px;overflow:hidden">杨哲瀚</div><div class="a nw" style="left:295.2px;top:160.38px;width:175.2px;padding-left:5px;font-size:17.6px;letter-spacing:-0.3px;line-height:22px;overflow:hidden">002703000050000-27</div><div class="a nw" style="left:471.4px;top:160.38px;width:174.0px;padding-left:5px;font-size:17.6px;letter-spacing:-0.3px;line-height:22px;overflow:hidden">手术标本检查与诊断</div><div class="a nw" style="left:646.4px;top:160.38px;width:242.0px;padding-left:5px;font-size:17.6px;letter-spacing:-0.3px;line-height:22px;overflow:hidden">手术标本检查与诊断（超过两个</div><div class="a nw" style="left:889.4px;top:160.38px;width:80.1px;padding-left:5px;font-size:17.6px;letter-spacing:-0.3px;line-height:22px;overflow:hidden">超过两个蜡块</div><div class="a nw" style="left:970.5px;top:160.38px;width:80.3px;padding-left:5px;font-size:17.6px;letter-spacing:-0.3px;line-height:22px;overflow:hidden">每个蜡块</div><div class="a nw" style="left:1051.8px;top:160.38px;width:79.5px;padding-left:5px;text-align:right;padding-right:1.5px;font-size:17.6px;letter-spacing:-0.3px;line-height:22px;overflow:hidden">18</div><div class="a nw" style="left:1132.3px;top:160.38px;width:80.0px;padding-left:5px;font-size:17.6px;letter-spacing:-0.3px;line-height:22px;overflow:hidden">4</div><div class="a nw" style="left:1213.3px;top:160.38px;width:106.7px;padding-left:5px;text-align:right;padding-right:1.5px;font-size:17.6px;letter-spacing:-0.3px;line-height:22px;overflow:hidden">72</div><div class="a nw" style="left:1321.0px;top:160.38px;width:107.3px;padding-left:5px;font-size:17.6px;letter-spacing:-0.3px;line-height:22px;overflow:hidden">0</div><div class="a nw" style="left:1429.3px;top:160.38px;width:93.1px;padding-left:5px;font-size:17.6px;letter-spacing:-0.3px;line-height:22px;overflow:hidden">高杰</div><div class="a nw" style="left:1523.4px;top:160.38px;width:93.9px;padding-left:5px;font-size:17.6px;letter-spacing:-0.3px;line-height:22px;overflow:hidden">陈明光</div><div class="a nw" style="left:1618.3px;top:160.38px;width:124.7px;padding-left:5px;font-size:17.6px;letter-spacing:-0.3px;line-height:22px;overflow:hidden">胃</div><div class="a nw" style="left:-0.5px;top:198.20px;width:105.9px;padding-left:5px;font-size:17.6px;letter-spacing:0;line-height:22px;overflow:hidden">2025-11-14</div><div class="a nw" style="left:106.4px;top:198.20px;width:107.2px;padding-left:5px;font-size:17.6px;letter-spacing:-0.3px;line-height:22px;overflow:hidden">09:13:50</div><div class="a nw" style="left:214.6px;top:198.20px;width:79.6px;padding-left:5px;font-size:17.6px;letter-spacing:-0.3px;line-height:22px;overflow:hidden">杨哲瀚</div><div class="a nw" style="left:295.2px;top:198.20px;width:175.2px;padding-left:5px;font-size:17.6px;letter-spacing:-0.3px;line-height:22px;overflow:hidden">002708000060000-27</div><div class="a nw" style="left:471.4px;top:198.20px;width:174.0px;padding-left:5px;font-size:17.6px;letter-spacing:-0.3px;line-height:22px;overflow:hidden">显微摄影术</div><div class="a nw" style="left:646.4px;top:198.20px;width:242.0px;padding-left:5px;font-size:17.6px;letter-spacing:-0.3px;line-height:22px;overflow:hidden">显微摄影术</div><div class="a nw" style="left:889.4px;top:198.20px;width:80.1px;padding-left:5px;font-size:17.6px;letter-spacing:-0.3px;line-height:22px;overflow:hidden">积累科研资料</div><div class="a nw" style="left:970.5px;top:198.20px;width:80.3px;padding-left:5px;font-size:17.6px;letter-spacing:-0.3px;line-height:22px;overflow:hidden">每个视野</div><div class="a nw" style="left:1051.8px;top:198.20px;width:79.5px;padding-left:5px;text-align:right;padding-right:1.5px;font-size:17.6px;letter-spacing:-0.3px;line-height:22px;overflow:hidden">34</div><div class="a nw" style="left:1132.3px;top:198.20px;width:80.0px;padding-left:5px;font-size:17.6px;letter-spacing:-0.3px;line-height:22px;overflow:hidden">2</div><div class="a nw" style="left:1213.3px;top:198.20px;width:106.7px;padding-left:5px;text-align:right;padding-right:1.5px;font-size:17.6px;letter-spacing:-0.3px;line-height:22px;overflow:hidden">68</div><div class="a nw" style="left:1321.0px;top:198.20px;width:107.3px;padding-left:5px;font-size:17.6px;letter-spacing:-0.3px;line-height:22px;overflow:hidden">0</div><div class="a nw" style="left:1429.3px;top:198.20px;width:93.1px;padding-left:5px;font-size:17.6px;letter-spacing:-0.3px;line-height:22px;overflow:hidden">陈军</div><div class="a nw" style="left:1523.4px;top:198.20px;width:93.9px;padding-left:5px;font-size:17.6px;letter-spacing:-0.3px;line-height:22px;overflow:hidden">陈明光</div><div class="a nw" style="left:1618.3px;top:198.20px;width:124.7px;padding-left:5px;font-size:17.6px;letter-spacing:-0.3px;line-height:22px;overflow:hidden">胃</div><div class="a nw" style="left:-0.5px;top:236.02px;width:105.9px;padding-left:5px;font-size:17.6px;letter-spacing:0;line-height:22px;overflow:hidden">2025-11-14</div><div class="a nw" style="left:106.4px;top:236.02px;width:107.2px;padding-left:5px;font-size:17.6px;letter-spacing:-0.3px;line-height:22px;overflow:hidden">00:13:37</div><div class="a nw" style="left:214.6px;top:236.02px;width:79.6px;padding-left:5px;font-size:17.6px;letter-spacing:-0.3px;line-height:22px;overflow:hidden">杨哲瀚</div><div class="a nw" style="left:295.2px;top:236.02px;width:175.2px;padding-left:5px;font-size:17.6px;letter-spacing:-0.3px;line-height:22px;overflow:hidden">003107010220000-31</div><div class="a nw" style="left:471.4px;top:236.02px;width:174.0px;padding-left:5px;font-size:17.6px;letter-spacing:-0.3px;line-height:22px;overflow:hidden">心电监测</div><div class="a nw" style="left:646.4px;top:236.02px;width:242.0px;padding-left:5px;font-size:17.6px;letter-spacing:-0.3px;line-height:22px;overflow:hidden">心电监测</div><div class="a nw" style="left:889.4px;top:236.02px;width:80.1px;padding-left:5px;font-size:17.6px;letter-spacing:-0.3px;line-height:22px;overflow:hidden"></div><div class="a nw" style="left:970.5px;top:236.02px;width:80.3px;padding-left:5px;font-size:17.6px;letter-spacing:-0.3px;line-height:22px;overflow:hidden">小时</div><div class="a nw" style="left:1051.8px;top:236.02px;width:79.5px;padding-left:5px;text-align:right;padding-right:1.5px;font-size:17.6px;letter-spacing:-0.3px;line-height:22px;overflow:hidden">4.1</div><div class="a nw" style="left:1132.3px;top:236.02px;width:80.0px;padding-left:5px;font-size:17.6px;letter-spacing:-0.3px;line-height:22px;overflow:hidden">25</div><div class="a nw" style="left:1213.3px;top:236.02px;width:106.7px;padding-left:5px;text-align:right;padding-right:1.5px;font-size:17.6px;letter-spacing:-0.3px;line-height:22px;overflow:hidden">102.5</div><div class="a nw" style="left:1321.0px;top:236.02px;width:107.3px;padding-left:5px;font-size:17.6px;letter-spacing:-0.3px;line-height:22px;overflow:hidden">0</div><div class="a nw" style="left:1429.3px;top:236.02px;width:93.1px;padding-left:5px;font-size:17.6px;letter-spacing:-0.3px;line-height:22px;overflow:hidden">高杰</div><div class="a nw" style="left:1523.4px;top:236.02px;width:93.9px;padding-left:5px;font-size:17.6px;letter-spacing:-0.3px;line-height:22px;overflow:hidden">许楚楚</div><div class="a nw" style="left:1618.3px;top:236.02px;width:124.7px;padding-left:5px;font-size:17.6px;letter-spacing:-0.3px;line-height:22px;overflow:hidden">胃</div><div class="a nw" style="left:-0.5px;top:273.84px;width:105.9px;padding-left:5px;font-size:17.6px;letter-spacing:0;line-height:22px;overflow:hidden">2025-11-14</div><div class="a nw" style="left:106.4px;top:273.84px;width:107.2px;padding-left:5px;font-size:17.6px;letter-spacing:-0.3px;line-height:22px;overflow:hidden">08:53:57</div><div class="a nw" style="left:214.6px;top:273.84px;width:79.6px;padding-left:5px;font-size:17.6px;letter-spacing:-0.3px;line-height:22px;overflow:hidden">杨哲瀚</div><div class="a nw" style="left:295.2px;top:273.84px;width:175.2px;padding-left:5px;font-size:17.6px;letter-spacing:-0.3px;line-height:22px;overflow:hidden">003107010220000-31</div><div class="a nw" style="left:471.4px;top:273.84px;width:174.0px;padding-left:5px;font-size:17.6px;letter-spacing:-0.3px;line-height:22px;overflow:hidden">心电监测</div><div class="a nw" style="left:646.4px;top:273.84px;width:242.0px;padding-left:5px;font-size:17.6px;letter-spacing:-0.3px;line-height:22px;overflow:hidden">心电监测</div><div class="a nw" style="left:889.4px;top:273.84px;width:80.1px;padding-left:5px;font-size:17.6px;letter-spacing:-0.3px;line-height:22px;overflow:hidden"></div><div class="a nw" style="left:970.5px;top:273.84px;width:80.3px;padding-left:5px;font-size:17.6px;letter-spacing:-0.3px;line-height:22px;overflow:hidden">小时</div><div class="a nw" style="left:1051.8px;top:273.84px;width:79.5px;padding-left:5px;text-align:right;padding-right:1.5px;font-size:17.6px;letter-spacing:-0.3px;line-height:22px;overflow:hidden">4.1</div><div class="a nw" style="left:1132.3px;top:273.84px;width:80.0px;padding-left:5px;font-size:17.6px;letter-spacing:-0.3px;line-height:22px;overflow:hidden">-16</div><div class="a nw" style="left:1213.3px;top:273.84px;width:106.7px;padding-left:5px;text-align:right;padding-right:1.5px;font-size:17.6px;letter-spacing:-0.3px;line-height:22px;overflow:hidden">-65.6</div><div class="a nw" style="left:1321.0px;top:273.84px;width:107.3px;padding-left:5px;font-size:17.6px;letter-spacing:-0.3px;line-height:22px;overflow:hidden">0</div><div class="a nw" style="left:1429.3px;top:273.84px;width:93.1px;padding-left:5px;font-size:17.6px;letter-spacing:-0.3px;line-height:22px;overflow:hidden">高杰</div><div class="a nw" style="left:1523.4px;top:273.84px;width:93.9px;padding-left:5px;font-size:17.6px;letter-spacing:-0.3px;line-height:22px;overflow:hidden">许楚楚</div><div class="a nw" style="left:1618.3px;top:273.84px;width:124.7px;padding-left:5px;font-size:17.6px;letter-spacing:-0.3px;line-height:22px;overflow:hidden">胃</div><div class="a nw" style="left:-0.5px;top:311.66px;width:105.9px;padding-left:5px;font-size:17.6px;letter-spacing:0;line-height:22px;overflow:hidden">2025-11-14</div><div class="a nw" style="left:106.4px;top:311.66px;width:107.2px;padding-left:5px;font-size:17.6px;letter-spacing:-0.3px;line-height:22px;overflow:hidden">00:13:37</div><div class="a nw" style="left:214.6px;top:311.66px;width:79.6px;padding-left:5px;font-size:17.6px;letter-spacing:-0.3px;line-height:22px;overflow:hidden">杨哲瀚</div><div class="a nw" style="left:295.2px;top:311.66px;width:175.2px;padding-left:5px;font-size:17.6px;letter-spacing:-0.3px;line-height:22px;overflow:hidden">003107010280000-31</div><div class="a nw" style="left:471.4px;top:311.66px;width:174.0px;padding-left:5px;font-size:17.6px;letter-spacing:-0.3px;line-height:22px;overflow:hidden">血氧饱和度监测</div><div class="a nw" style="left:646.4px;top:311.66px;width:242.0px;padding-left:5px;font-size:17.6px;letter-spacing:-0.3px;line-height:22px;overflow:hidden">血氧饱和度监测</div><div class="a nw" style="left:889.4px;top:311.66px;width:80.1px;padding-left:5px;font-size:17.6px;letter-spacing:-0.3px;line-height:22px;overflow:hidden"></div><div class="a nw" style="left:970.5px;top:311.66px;width:80.3px;padding-left:5px;font-size:17.6px;letter-spacing:-0.3px;line-height:22px;overflow:hidden">小时</div><div class="a nw" style="left:1051.8px;top:311.66px;width:79.5px;padding-left:5px;text-align:right;padding-right:1.5px;font-size:17.6px;letter-spacing:-0.3px;line-height:22px;overflow:hidden">4.1</div><div class="a nw" style="left:1132.3px;top:311.66px;width:80.0px;padding-left:5px;font-size:17.6px;letter-spacing:-0.3px;line-height:22px;overflow:hidden">25</div><div class="a nw" style="left:1213.3px;top:311.66px;width:106.7px;padding-left:5px;text-align:right;padding-right:1.5px;font-size:17.6px;letter-spacing:-0.3px;line-height:22px;overflow:hidden">102.5</div><div class="a nw" style="left:1321.0px;top:311.66px;width:107.3px;padding-left:5px;font-size:17.6px;letter-spacing:-0.3px;line-height:22px;overflow:hidden">0</div><div class="a nw" style="left:1429.3px;top:311.66px;width:93.1px;padding-left:5px;font-size:17.6px;letter-spacing:-0.3px;line-height:22px;overflow:hidden">高杰</div><div class="a nw" style="left:1523.4px;top:311.66px;width:93.9px;padding-left:5px;font-size:17.6px;letter-spacing:-0.3px;line-height:22px;overflow:hidden">许楚楚</div><div class="a nw" style="left:1618.3px;top:311.66px;width:124.7px;padding-left:5px;font-size:17.6px;letter-spacing:-0.3px;line-height:22px;overflow:hidden">胃</div><div class="a nw" style="left:-0.5px;top:349.48px;width:105.9px;padding-left:5px;font-size:17.6px;letter-spacing:0;line-height:22px;overflow:hidden">2025-11-14</div><div class="a nw" style="left:106.4px;top:349.48px;width:107.2px;padding-left:5px;font-size:17.6px;letter-spacing:-0.3px;line-height:22px;overflow:hidden">08:53:57</div><div class="a nw" style="left:214.6px;top:349.48px;width:79.6px;padding-left:5px;font-size:17.6px;letter-spacing:-0.3px;line-height:22px;overflow:hidden">杨哲瀚</div><div class="a nw" style="left:295.2px;top:349.48px;width:175.2px;padding-left:5px;font-size:17.6px;letter-spacing:-0.3px;line-height:22px;overflow:hidden">003107010280000-31</div><div class="a nw" style="left:471.4px;top:349.48px;width:174.0px;padding-left:5px;font-size:17.6px;letter-spacing:-0.3px;line-height:22px;overflow:hidden">血氧饱和度监测</div><div class="a nw" style="left:646.4px;top:349.48px;width:242.0px;padding-left:5px;font-size:17.6px;letter-spacing:-0.3px;line-height:22px;overflow:hidden">血氧饱和度监测</div><div class="a nw" style="left:889.4px;top:349.48px;width:80.1px;padding-left:5px;font-size:17.6px;letter-spacing:-0.3px;line-height:22px;overflow:hidden"></div><div class="a nw" style="left:970.5px;top:349.48px;width:80.3px;padding-left:5px;font-size:17.6px;letter-spacing:-0.3px;line-height:22px;overflow:hidden">小时</div><div class="a nw" style="left:1051.8px;top:349.48px;width:79.5px;padding-left:5px;text-align:right;padding-right:1.5px;font-size:17.6px;letter-spacing:-0.3px;line-height:22px;overflow:hidden">4.1</div><div class="a nw" style="left:1132.3px;top:349.48px;width:80.0px;padding-left:5px;font-size:17.6px;letter-spacing:-0.3px;line-height:22px;overflow:hidden">-16</div><div class="a nw" style="left:1213.3px;top:349.48px;width:106.7px;padding-left:5px;text-align:right;padding-right:1.5px;font-size:17.6px;letter-spacing:-0.3px;line-height:22px;overflow:hidden">-65.6</div><div class="a nw" style="left:1321.0px;top:349.48px;width:107.3px;padding-left:5px;font-size:17.6px;letter-spacing:-0.3px;line-height:22px;overflow:hidden">0</div><div class="a nw" style="left:1429.3px;top:349.48px;width:93.1px;padding-left:5px;font-size:17.6px;letter-spacing:-0.3px;line-height:22px;overflow:hidden">高杰</div><div class="a nw" style="left:1523.4px;top:349.48px;width:93.9px;padding-left:5px;font-size:17.6px;letter-spacing:-0.3px;line-height:22px;overflow:hidden">许楚楚</div><div class="a nw" style="left:1618.3px;top:349.48px;width:124.7px;padding-left:5px;font-size:17.6px;letter-spacing:-0.3px;line-height:22px;overflow:hidden">胃</div><div class="a nw" style="left:-0.5px;top:387.30px;width:105.9px;padding-left:5px;font-size:17.6px;letter-spacing:0;line-height:22px;overflow:hidden">2025-11-14</div><div class="a nw" style="left:106.4px;top:387.30px;width:107.2px;padding-left:5px;font-size:17.6px;letter-spacing:-0.3px;line-height:22px;overflow:hidden">08:22:36</div><div class="a nw" style="left:214.6px;top:387.30px;width:79.6px;padding-left:5px;font-size:17.6px;letter-spacing:-0.3px;line-height:22px;overflow:hidden">杨哲瀚</div><div class="a nw" style="left:295.2px;top:387.30px;width:175.2px;padding-left:5px;font-size:17.6px;letter-spacing:-0.3px;line-height:22px;overflow:hidden">C11010817600002071</div><div class="a nw" style="left:471.4px;top:387.30px;width:174.0px;padding-left:5px;font-size:17.6px;letter-spacing:-0.3px;line-height:22px;overflow:hidden">特殊止血材料</div><div class="a nw" style="left:646.4px;top:387.30px;width:242.0px;padding-left:5px;font-size:17.6px;letter-spacing:-0.3px;line-height:22px;overflow:hidden">结扎血管夹</div><div class="a nw" style="left:889.4px;top:387.30px;width:80.1px;padding-left:5px;font-size:17.6px;letter-spacing:-0.3px;line-height:22px;overflow:hidden">WD-JZ-L(4)</div><div class="a nw" style="left:970.5px;top:387.30px;width:80.3px;padding-left:5px;font-size:17.6px;letter-spacing:-0.3px;line-height:22px;overflow:hidden">板</div><div class="a nw" style="left:1051.8px;top:387.30px;width:79.5px;padding-left:5px;text-align:right;padding-right:1.5px;font-size:17.6px;letter-spacing:-0.3px;line-height:22px;overflow:hidden">88</div><div class="a nw" style="left:1132.3px;top:387.30px;width:80.0px;padding-left:5px;font-size:17.6px;letter-spacing:-0.3px;line-height:22px;overflow:hidden">1</div><div class="a nw" style="left:1213.3px;top:387.30px;width:106.7px;padding-left:5px;text-align:right;padding-right:1.5px;font-size:17.6px;letter-spacing:-0.3px;line-height:22px;overflow:hidden">88</div><div class="a nw" style="left:1321.0px;top:387.30px;width:107.3px;padding-left:5px;font-size:17.6px;letter-spacing:-0.3px;line-height:22px;overflow:hidden">100</div><div class="a nw" style="left:1429.3px;top:387.30px;width:93.1px;padding-left:5px;font-size:17.6px;letter-spacing:-0.3px;line-height:22px;overflow:hidden">高杰</div><div class="a nw" style="left:1523.4px;top:387.30px;width:93.9px;padding-left:5px;font-size:17.6px;letter-spacing:-0.3px;line-height:22px;overflow:hidden">谢丽默</div><div class="a nw" style="left:1618.3px;top:387.30px;width:124.7px;padding-left:5px;font-size:17.6px;letter-spacing:-0.3px;line-height:22px;overflow:hidden">手</div><div class="a nw" style="left:-0.5px;top:425.12px;width:105.9px;padding-left:5px;font-size:17.6px;letter-spacing:0;line-height:22px;overflow:hidden">2025-11-14</div><div class="a nw" style="left:106.4px;top:425.12px;width:107.2px;padding-left:5px;font-size:17.6px;letter-spacing:-0.3px;line-height:22px;overflow:hidden">09:44:00</div><div class="a nw" style="left:214.6px;top:425.12px;width:79.6px;padding-left:5px;font-size:17.6px;letter-spacing:-0.3px;line-height:22px;overflow:hidden">杨哲瀚</div><div class="a nw" style="left:295.2px;top:425.12px;width:175.2px;padding-left:5px;font-size:17.6px;letter-spacing:-0.3px;line-height:22px;overflow:hidden">C16050119402002001</div><div class="a nw" style="left:471.4px;top:425.12px;width:174.0px;padding-left:5px;font-size:17.6px;letter-spacing:-0.3px;line-height:22px;overflow:hidden">静脉留置针</div><div class="a nw" style="left:646.4px;top:425.12px;width:242.0px;padding-left:5px;font-size:17.6px;letter-spacing:-0.3px;line-height:22px;overflow:hidden">一次性使用静脉留置针(林华)</div><div class="a nw" style="left:889.4px;top:425.12px;width:80.1px;padding-left:5px;font-size:17.6px;letter-spacing:-0.3px;line-height:22px;overflow:hidden">22GY-安全型</div><div class="a nw" style="left:970.5px;top:425.12px;width:80.3px;padding-left:5px;font-size:17.6px;letter-spacing:-0.3px;line-height:22px;overflow:hidden">支</div><div class="a nw" style="left:1051.8px;top:425.12px;width:79.5px;padding-left:5px;text-align:right;padding-right:1.5px;font-size:17.6px;letter-spacing:-0.3px;line-height:22px;overflow:hidden">4.94</div><div class="a nw" style="left:1132.3px;top:425.12px;width:80.0px;padding-left:5px;font-size:17.6px;letter-spacing:-0.3px;line-height:22px;overflow:hidden">1</div><div class="a nw" style="left:1213.3px;top:425.12px;width:106.7px;padding-left:5px;text-align:right;padding-right:1.5px;font-size:17.6px;letter-spacing:-0.3px;line-height:22px;overflow:hidden">4.94</div><div class="a nw" style="left:1321.0px;top:425.12px;width:107.3px;padding-left:5px;font-size:17.6px;letter-spacing:-0.3px;line-height:22px;overflow:hidden">15</div><div class="a nw" style="left:1429.3px;top:425.12px;width:93.1px;padding-left:5px;font-size:17.6px;letter-spacing:-0.3px;line-height:22px;overflow:hidden">陈军</div><div class="a nw" style="left:1523.4px;top:425.12px;width:93.9px;padding-left:5px;font-size:17.6px;letter-spacing:-0.3px;line-height:22px;overflow:hidden">李灵筠</div><div class="a nw" style="left:1618.3px;top:425.12px;width:124.7px;padding-left:5px;font-size:17.6px;letter-spacing:-0.3px;line-height:22px;overflow:hidden">胃</div><div class="a nw" style="left:-0.5px;top:462.94px;width:105.9px;padding-left:5px;font-size:17.6px;letter-spacing:0;line-height:22px;overflow:hidden">2025-11-14</div><div class="a nw" style="left:106.4px;top:462.94px;width:107.2px;padding-left:5px;font-size:17.6px;letter-spacing:-0.3px;line-height:22px;overflow:hidden">00:12:55</div><div class="a nw" style="left:214.6px;top:462.94px;width:79.6px;padding-left:5px;font-size:17.6px;letter-spacing:-0.3px;line-height:22px;overflow:hidden">杨哲瀚</div><div class="a nw" style="left:295.2px;top:462.94px;width:175.2px;padding-left:5px;font-size:17.6px;letter-spacing:-0.3px;line-height:22px;overflow:hidden">C14230120200001071</div><div class="a nw" style="left:471.4px;top:462.94px;width:174.0px;padding-left:5px;font-size:17.6px;letter-spacing:-0.3px;line-height:22px;overflow:hidden">一次性输液器</div><div class="a nw" style="left:646.4px;top:462.94px;width:242.0px;padding-left:5px;font-size:17.6px;letter-spacing:-0.3px;line-height:22px;overflow:hidden">一次性使用输液器</div><div class="a nw" style="left:889.4px;top:462.94px;width:80.1px;padding-left:5px;font-size:17.6px;letter-spacing:-0.3px;line-height:22px;overflow:hidden">0.7:带针(康</div><div class="a nw" style="left:970.5px;top:462.94px;width:80.3px;padding-left:5px;font-size:17.6px;letter-spacing:-0.3px;line-height:22px;overflow:hidden">支</div><div class="a nw" style="left:1051.8px;top:462.94px;width:79.5px;padding-left:5px;text-align:right;padding-right:1.5px;font-size:17.6px;letter-spacing:-0.3px;line-height:22px;overflow:hidden">0.63</div><div class="a nw" style="left:1132.3px;top:462.94px;width:80.0px;padding-left:5px;font-size:17.6px;letter-spacing:-0.3px;line-height:22px;overflow:hidden">1</div><div class="a nw" style="left:1213.3px;top:462.94px;width:106.7px;padding-left:5px;text-align:right;padding-right:1.5px;font-size:17.6px;letter-spacing:-0.3px;line-height:22px;overflow:hidden">0.63</div><div class="a nw" style="left:1321.0px;top:462.94px;width:107.3px;padding-left:5px;font-size:17.6px;letter-spacing:-0.3px;line-height:22px;overflow:hidden">15</div><div class="a nw" style="left:1429.3px;top:462.94px;width:93.1px;padding-left:5px;font-size:17.6px;letter-spacing:-0.3px;line-height:22px;overflow:hidden">高杰</div><div class="a nw" style="left:1523.4px;top:462.94px;width:93.9px;padding-left:5px;font-size:17.6px;letter-spacing:-0.3px;line-height:22px;overflow:hidden">许楚楚</div><div class="a nw" style="left:1618.3px;top:462.94px;width:124.7px;padding-left:5px;font-size:17.6px;letter-spacing:-0.3px;line-height:22px;overflow:hidden">胃</div><div class="a nw" style="left:-0.5px;top:500.76px;width:105.9px;padding-left:5px;font-size:17.6px;letter-spacing:0;line-height:22px;overflow:hidden">2025-11-14</div><div class="a nw" style="left:106.4px;top:500.76px;width:107.2px;padding-left:5px;font-size:17.6px;letter-spacing:-0.3px;line-height:22px;overflow:hidden">08:22:36</div><div class="a nw" style="left:214.6px;top:500.76px;width:79.6px;padding-left:5px;font-size:17.6px;letter-spacing:-0.3px;line-height:22px;overflow:hidden">杨哲瀚</div><div class="a nw" style="left:295.2px;top:500.76px;width:175.2px;padding-left:5px;font-size:17.6px;letter-spacing:-0.3px;line-height:22px;overflow:hidden">C14230120200001047</div><div class="a nw" style="left:471.4px;top:500.76px;width:174.0px;padding-left:5px;font-size:17.6px;letter-spacing:-0.3px;line-height:22px;overflow:hidden">一次性输液器</div><div class="a nw" style="left:646.4px;top:500.76px;width:242.0px;padding-left:5px;font-size:17.6px;letter-spacing:-0.3px;line-height:22px;overflow:hidden">一次性使用输液器带针</div><div class="a nw" style="left:889.4px;top:500.76px;width:80.1px;padding-left:5px;font-size:17.6px;letter-spacing:-0.3px;line-height:22px;overflow:hidden">0.55mm</div><div class="a nw" style="left:970.5px;top:500.76px;width:80.3px;padding-left:5px;font-size:17.6px;letter-spacing:-0.3px;line-height:22px;overflow:hidden">支</div><div class="a nw" style="left:1051.8px;top:500.76px;width:79.5px;padding-left:5px;text-align:right;padding-right:1.5px;font-size:17.6px;letter-spacing:-0.3px;line-height:22px;overflow:hidden">0.53</div><div class="a nw" style="left:1132.3px;top:500.76px;width:80.0px;padding-left:5px;font-size:17.6px;letter-spacing:-0.3px;line-height:22px;overflow:hidden">1</div><div class="a nw" style="left:1213.3px;top:500.76px;width:106.7px;padding-left:5px;text-align:right;padding-right:1.5px;font-size:17.6px;letter-spacing:-0.3px;line-height:22px;overflow:hidden">0.53</div><div class="a nw" style="left:1321.0px;top:500.76px;width:107.3px;padding-left:5px;font-size:17.6px;letter-spacing:-0.3px;line-height:22px;overflow:hidden">15</div><div class="a nw" style="left:1429.3px;top:500.76px;width:93.1px;padding-left:5px;font-size:17.6px;letter-spacing:-0.3px;line-height:22px;overflow:hidden">高杰</div><div class="a nw" style="left:1523.4px;top:500.76px;width:93.9px;padding-left:5px;font-size:17.6px;letter-spacing:-0.3px;line-height:22px;overflow:hidden">谢丽默</div><div class="a nw" style="left:1618.3px;top:500.76px;width:124.7px;padding-left:5px;font-size:17.6px;letter-spacing:-0.3px;line-height:22px;overflow:hidden">手</div><div class="a nw" style="left:-0.5px;top:538.58px;width:105.9px;padding-left:5px;font-size:17.6px;letter-spacing:0;line-height:22px;overflow:hidden">2025-11-14</div><div class="a nw" style="left:106.4px;top:538.58px;width:107.2px;padding-left:5px;font-size:17.6px;letter-spacing:-0.3px;line-height:22px;overflow:hidden">08:22:36</div><div class="a nw" style="left:214.6px;top:538.58px;width:79.6px;padding-left:5px;font-size:17.6px;letter-spacing:-0.3px;line-height:22px;overflow:hidden">杨哲瀚</div><div class="a nw" style="left:295.2px;top:538.58px;width:175.2px;padding-left:5px;font-size:17.6px;letter-spacing:-0.3px;line-height:22px;overflow:hidden">C14080318500003090</div><div class="a nw" style="left:471.4px;top:538.58px;width:174.0px;padding-left:5px;font-size:17.6px;letter-spacing:-0.3px;line-height:22px;overflow:hidden">可吸收性特殊理化缝线</div><div class="a nw" style="left:646.4px;top:538.58px;width:242.0px;padding-left:5px;font-size:17.6px;letter-spacing:-0.3px;line-height:22px;overflow:hidden">可吸收性缝线MCP605H</div><div class="a nw" style="left:889.4px;top:538.58px;width:80.1px;padding-left:5px;font-size:17.6px;letter-spacing:-0.3px;line-height:22px;overflow:hidden">MCP605H</div><div class="a nw" style="left:970.5px;top:538.58px;width:80.3px;padding-left:5px;font-size:17.6px;letter-spacing:-0.3px;line-height:22px;overflow:hidden">包</div><div class="a nw" style="left:1051.8px;top:538.58px;width:79.5px;padding-left:5px;text-align:right;padding-right:1.5px;font-size:17.6px;letter-spacing:-0.3px;line-height:22px;overflow:hidden">186.52</div><div class="a nw" style="left:1132.3px;top:538.58px;width:80.0px;padding-left:5px;font-size:17.6px;letter-spacing:-0.3px;line-height:22px;overflow:hidden">1</div><div class="a nw" style="left:1213.3px;top:538.58px;width:106.7px;padding-left:5px;text-align:right;padding-right:1.5px;font-size:17.6px;letter-spacing:-0.3px;line-height:22px;overflow:hidden">186.52</div><div class="a nw" style="left:1321.0px;top:538.58px;width:107.3px;padding-left:5px;font-size:17.6px;letter-spacing:-0.3px;line-height:22px;overflow:hidden">15</div><div class="a nw" style="left:1429.3px;top:538.58px;width:93.1px;padding-left:5px;font-size:17.6px;letter-spacing:-0.3px;line-height:22px;overflow:hidden">高杰</div><div class="a nw" style="left:1523.4px;top:538.58px;width:93.9px;padding-left:5px;font-size:17.6px;letter-spacing:-0.3px;line-height:22px;overflow:hidden">谢丽默</div><div class="a nw" style="left:1618.3px;top:538.58px;width:124.7px;padding-left:5px;font-size:17.6px;letter-spacing:-0.3px;line-height:22px;overflow:hidden">手</div><div class="a nw" style="left:-0.5px;top:576.40px;width:105.9px;padding-left:5px;font-size:17.6px;letter-spacing:0;line-height:22px;overflow:hidden">2025-11-14</div><div class="a nw" style="left:106.4px;top:576.40px;width:107.2px;padding-left:5px;font-size:17.6px;letter-spacing:-0.3px;line-height:22px;overflow:hidden">08:54:07</div><div class="a nw" style="left:214.6px;top:576.40px;width:79.6px;padding-left:5px;font-size:17.6px;letter-spacing:-0.3px;line-height:22px;overflow:hidden">杨哲瀚</div><div class="a nw" style="left:295.2px;top:576.40px;width:175.2px;padding-left:5px;font-size:17.6px;letter-spacing:-0.3px;line-height:22px;overflow:hidden">C14250120900000059</div><div class="a nw" style="left:471.4px;top:576.40px;width:174.0px;padding-left:5px;font-size:17.6px;letter-spacing:-0.3px;line-height:22px;overflow:hidden">特殊气管导管</div><div class="a nw" style="left:646.4px;top:576.40px;width:242.0px;padding-left:5px;font-size:17.6px;letter-spacing:-0.3px;line-height:22px;overflow:hidden">加强型气管插管</div><div class="a nw" style="left:889.4px;top:576.40px;width:80.1px;padding-left:5px;font-size:17.6px;letter-spacing:-0.3px;line-height:22px;overflow:hidden">/6.5#</div><div class="a nw" style="left:970.5px;top:576.40px;width:80.3px;padding-left:5px;font-size:17.6px;letter-spacing:-0.3px;line-height:22px;overflow:hidden">支</div><div class="a nw" style="left:1051.8px;top:576.40px;width:79.5px;padding-left:5px;text-align:right;padding-right:1.5px;font-size:17.6px;letter-spacing:-0.3px;line-height:22px;overflow:hidden">105.4</div><div class="a nw" style="left:1132.3px;top:576.40px;width:80.0px;padding-left:5px;font-size:17.6px;letter-spacing:-0.3px;line-height:22px;overflow:hidden">1</div><div class="a nw" style="left:1213.3px;top:576.40px;width:106.7px;padding-left:5px;text-align:right;padding-right:1.5px;font-size:17.6px;letter-spacing:-0.3px;line-height:22px;overflow:hidden">105.4</div><div class="a nw" style="left:1321.0px;top:576.40px;width:107.3px;padding-left:5px;font-size:17.6px;letter-spacing:-0.3px;line-height:22px;overflow:hidden">15</div><div class="a nw" style="left:1429.3px;top:576.40px;width:93.1px;padding-left:5px;font-size:17.6px;letter-spacing:-0.3px;line-height:22px;overflow:hidden">陈晨</div><div class="a nw" style="left:1523.4px;top:576.40px;width:93.9px;padding-left:5px;font-size:17.6px;letter-spacing:-0.3px;line-height:22px;overflow:hidden">徐继玲</div><div class="a nw" style="left:1618.3px;top:576.40px;width:124.7px;padding-left:5px;font-size:17.6px;letter-spacing:-0.3px;line-height:22px;overflow:hidden">麻</div><div class="a nw" style="left:-0.5px;top:614.22px;width:105.9px;padding-left:5px;font-size:17.6px;letter-spacing:0;line-height:22px;overflow:hidden">2025-11-14</div><div class="a nw" style="left:106.4px;top:614.22px;width:107.2px;padding-left:5px;font-size:17.6px;letter-spacing:-0.3px;line-height:22px;overflow:hidden">08:54:07</div><div class="a nw" style="left:214.6px;top:614.22px;width:79.6px;padding-left:5px;font-size:17.6px;letter-spacing:-0.3px;line-height:22px;overflow:hidden">杨哲瀚</div><div class="a nw" style="left:295.2px;top:614.22px;width:175.2px;padding-left:5px;font-size:17.6px;letter-spacing:-0.3px;line-height:22px;overflow:hidden">C14171101000000110</div><div class="a nw" style="left:471.4px;top:614.22px;width:174.0px;padding-left:5px;font-size:17.6px;letter-spacing:-0.3px;line-height:22px;overflow:hidden">一次性吸痰管</div><div class="a nw" style="left:646.4px;top:614.22px;width:242.0px;padding-left:5px;font-size:17.6px;letter-spacing:-0.3px;line-height:22px;overflow:hidden">一次性吸痰管</div><div class="a nw" style="left:889.4px;top:614.22px;width:80.1px;padding-left:5px;font-size:17.6px;letter-spacing:-0.3px;line-height:22px;overflow:hidden">F12</div><div class="a nw" style="left:970.5px;top:614.22px;width:80.3px;padding-left:5px;font-size:17.6px;letter-spacing:-0.3px;line-height:22px;overflow:hidden">支</div><div class="a nw" style="left:1051.8px;top:614.22px;width:79.5px;padding-left:5px;text-align:right;padding-right:1.5px;font-size:17.6px;letter-spacing:-0.3px;line-height:22px;overflow:hidden">0.8</div><div class="a nw" style="left:1132.3px;top:614.22px;width:80.0px;padding-left:5px;font-size:17.6px;letter-spacing:-0.3px;line-height:22px;overflow:hidden">1</div><div class="a nw" style="left:1213.3px;top:614.22px;width:106.7px;padding-left:5px;text-align:right;padding-right:1.5px;font-size:17.6px;letter-spacing:-0.3px;line-height:22px;overflow:hidden">0.8</div><div class="a nw" style="left:1321.0px;top:614.22px;width:107.3px;padding-left:5px;font-size:17.6px;letter-spacing:-0.3px;line-height:22px;overflow:hidden">15</div><div class="a nw" style="left:1429.3px;top:614.22px;width:93.1px;padding-left:5px;font-size:17.6px;letter-spacing:-0.3px;line-height:22px;overflow:hidden">陈晨</div><div class="a nw" style="left:1523.4px;top:614.22px;width:93.9px;padding-left:5px;font-size:17.6px;letter-spacing:-0.3px;line-height:22px;overflow:hidden">徐继玲</div><div class="a nw" style="left:1618.3px;top:614.22px;width:124.7px;padding-left:5px;font-size:17.6px;letter-spacing:-0.3px;line-height:22px;overflow:hidden">麻</div><div class="a nw" style="left:-0.5px;top:652.04px;width:105.9px;padding-left:5px;font-size:17.6px;letter-spacing:0;line-height:22px;overflow:hidden">2025-11-14</div><div class="a nw" style="left:106.4px;top:652.04px;width:107.2px;padding-left:5px;font-size:17.6px;letter-spacing:-0.3px;line-height:22px;overflow:hidden">00:36:26</div><div class="a nw" style="left:214.6px;top:652.04px;width:79.6px;padding-left:5px;font-size:17.6px;letter-spacing:-0.3px;line-height:22px;overflow:hidden">杨哲瀚</div><div class="a nw" style="left:295.2px;top:652.04px;width:175.2px;padding-left:5px;font-size:17.6px;letter-spacing:-0.3px;line-height:22px;overflow:hidden">C16010110200003047</div><div class="a nw" style="left:471.4px;top:652.04px;width:174.0px;padding-left:5px;font-size:17.6px;letter-spacing:-0.3px;line-height:22px;overflow:hidden">注射器</div><div class="a nw" style="left:646.4px;top:652.04px;width:242.0px;padding-left:5px;font-size:17.6px;letter-spacing:-0.3px;line-height:22px;overflow:hidden">一次性使用配药用注射器</div><div class="a nw" style="left:889.4px;top:652.04px;width:80.1px;padding-left:5px;font-size:17.6px;letter-spacing:-0.3px;line-height:22px;overflow:hidden">1.6*30/20</div><div class="a nw" style="left:970.5px;top:652.04px;width:80.3px;padding-left:5px;font-size:17.6px;letter-spacing:-0.3px;line-height:22px;overflow:hidden">支</div><div class="a nw" style="left:1051.8px;top:652.04px;width:79.5px;padding-left:5px;text-align:right;padding-right:1.5px;font-size:17.6px;letter-spacing:-0.3px;line-height:22px;overflow:hidden">0.58</div><div class="a nw" style="left:1132.3px;top:652.04px;width:80.0px;padding-left:5px;font-size:17.6px;letter-spacing:-0.3px;line-height:22px;overflow:hidden">2</div><div class="a nw" style="left:1213.3px;top:652.04px;width:106.7px;padding-left:5px;text-align:right;padding-right:1.5px;font-size:17.6px;letter-spacing:-0.3px;line-height:22px;overflow:hidden">1.16</div><div class="a nw" style="left:1321.0px;top:652.04px;width:107.3px;padding-left:5px;font-size:17.6px;letter-spacing:-0.3px;line-height:22px;overflow:hidden">15</div><div class="a nw" style="left:1429.3px;top:652.04px;width:93.1px;padding-left:5px;font-size:17.6px;letter-spacing:-0.3px;line-height:22px;overflow:hidden">高杰</div><div class="a nw" style="left:1523.4px;top:652.04px;width:93.9px;padding-left:5px;font-size:17.6px;letter-spacing:-0.3px;line-height:22px;overflow:hidden">练秀娟</div><div class="a nw" style="left:1618.3px;top:652.04px;width:124.7px;padding-left:5px;font-size:17.6px;letter-spacing:-0.3px;line-height:22px;overflow:hidden">胃</div><div class="a nw" style="left:-0.5px;top:689.86px;width:105.9px;padding-left:5px;font-size:17.6px;letter-spacing:0;line-height:22px;overflow:hidden">2025-11-14</div><div class="a nw" style="left:106.4px;top:689.86px;width:107.2px;padding-left:5px;font-size:17.6px;letter-spacing:-0.3px;line-height:22px;overflow:hidden">00:36:26</div><div class="a nw" style="left:214.6px;top:689.86px;width:79.6px;padding-left:5px;font-size:17.6px;letter-spacing:-0.3px;line-height:22px;overflow:hidden">杨哲瀚</div><div class="a nw" style="left:295.2px;top:689.86px;width:175.2px;padding-left:5px;font-size:17.6px;letter-spacing:-0.3px;line-height:22px;overflow:hidden">C16010110200003047</div><div class="a nw" style="left:471.4px;top:689.86px;width:174.0px;padding-left:5px;font-size:17.6px;letter-spacing:-0.3px;line-height:22px;overflow:hidden">注射器</div><div class="a nw" style="left:646.4px;top:689.86px;width:242.0px;padding-left:5px;font-size:17.6px;letter-spacing:-0.3px;line-height:22px;overflow:hidden">一次性使用配药用注射器</div><div class="a nw" style="left:889.4px;top:689.86px;width:80.1px;padding-left:5px;font-size:17.6px;letter-spacing:-0.3px;line-height:22px;overflow:hidden">1.6*30/20</div><div class="a nw" style="left:970.5px;top:689.86px;width:80.3px;padding-left:5px;font-size:17.6px;letter-spacing:-0.3px;line-height:22px;overflow:hidden">支</div><div class="a nw" style="left:1051.8px;top:689.86px;width:79.5px;padding-left:5px;text-align:right;padding-right:1.5px;font-size:17.6px;letter-spacing:-0.3px;line-height:22px;overflow:hidden">0.58</div><div class="a nw" style="left:1132.3px;top:689.86px;width:80.0px;padding-left:5px;font-size:17.6px;letter-spacing:-0.3px;line-height:22px;overflow:hidden">2</div><div class="a nw" style="left:1213.3px;top:689.86px;width:106.7px;padding-left:5px;text-align:right;padding-right:1.5px;font-size:17.6px;letter-spacing:-0.3px;line-height:22px;overflow:hidden">1.16</div><div class="a nw" style="left:1321.0px;top:689.86px;width:107.3px;padding-left:5px;font-size:17.6px;letter-spacing:-0.3px;line-height:22px;overflow:hidden">15</div><div class="a nw" style="left:1429.3px;top:689.86px;width:93.1px;padding-left:5px;font-size:17.6px;letter-spacing:-0.3px;line-height:22px;overflow:hidden">高杰</div><div class="a nw" style="left:1523.4px;top:689.86px;width:93.9px;padding-left:5px;font-size:17.6px;letter-spacing:-0.3px;line-height:22px;overflow:hidden">练秀娟</div><div class="a nw" style="left:1618.3px;top:689.86px;width:124.7px;padding-left:5px;font-size:17.6px;letter-spacing:-0.3px;line-height:22px;overflow:hidden">胃</div></div><div class="a" style="left:105.6px;top:0;width:1px;height:38px;background:#e0e3eb"></div><div class="a nw" style="left:-0.5px;top:9px;width:105.9px;padding-left:5px;font-size:17.6px;letter-spacing:-0.3px;line-height:22px;overflow:hidden">清单日期</div><div class="a" style="left:213.8px;top:0;width:1px;height:38px;background:#e0e3eb"></div><div class="a nw" style="left:106.4px;top:9px;width:107.2px;padding-left:5px;font-size:17.6px;letter-spacing:-0.3px;line-height:22px;overflow:hidden">清单时间</div><div class="a" style="left:294.4px;top:0;width:1px;height:38px;background:#e0e3eb"></div><div class="a nw" style="left:214.6px;top:9px;width:79.6px;padding-left:5px;font-size:17.6px;letter-spacing:-0.3px;line-height:22px;overflow:hidden">姓名</div><div class="a" style="left:470.6px;top:0;width:1px;height:38px;background:#e0e3eb"></div><div class="a nw" style="left:295.2px;top:9px;width:175.2px;padding-left:5px;font-size:17.6px;letter-spacing:-0.3px;line-height:22px;overflow:hidden">国家医保标准编码</div><div class="a" style="left:645.6px;top:0;width:1px;height:38px;background:#e0e3eb"></div><div class="a nw" style="left:471.4px;top:9px;width:174.0px;padding-left:5px;font-size:17.6px;letter-spacing:-0.3px;line-height:22px;overflow:hidden">国家医保标准名称</div><div class="a" style="left:888.6px;top:0;width:1px;height:38px;background:#e0e3eb"></div><div class="a nw" style="left:646.4px;top:9px;width:242.0px;padding-left:5px;font-size:17.6px;letter-spacing:-0.3px;line-height:22px;overflow:hidden">项目/药品名称</div><div class="a" style="left:969.7px;top:0;width:1px;height:38px;background:#e0e3eb"></div><div class="a nw" style="left:889.4px;top:9px;width:80.1px;padding-left:5px;font-size:17.6px;letter-spacing:-0.3px;line-height:22px;overflow:hidden">规格</div><div class="a" style="left:1051.0px;top:0;width:1px;height:38px;background:#e0e3eb"></div><div class="a nw" style="left:970.5px;top:9px;width:80.3px;padding-left:5px;font-size:17.6px;letter-spacing:-0.3px;line-height:22px;overflow:hidden">单位</div><div class="a" style="left:1131.5px;top:0;width:1px;height:38px;background:#e0e3eb"></div><div class="a nw" style="left:1051.8px;top:9px;width:79.5px;padding-left:5px;text-align:right;padding-right:1.5px;font-size:17.6px;letter-spacing:-0.3px;line-height:22px;overflow:hidden">单价</div><div class="a" style="left:1212.5px;top:0;width:1px;height:38px;background:#e0e3eb"></div><div class="a nw" style="left:1132.3px;top:9px;width:80.0px;padding-left:5px;font-size:17.6px;letter-spacing:-0.3px;line-height:22px;overflow:hidden">数量</div><div class="a" style="left:1320.2px;top:0;width:1px;height:38px;background:#e0e3eb"></div><div class="a nw" style="left:1213.3px;top:9px;width:106.7px;padding-left:5px;text-align:right;padding-right:1.5px;font-size:17.6px;letter-spacing:-0.3px;line-height:22px;overflow:hidden">合计金额</div><div class="a" style="left:1428.5px;top:0;width:1px;height:38px;background:#e0e3eb"></div><div class="a nw" style="left:1321.0px;top:9px;width:107.3px;padding-left:5px;font-size:17.6px;letter-spacing:-0.3px;line-height:22px;overflow:hidden">自付比例</div><div class="a" style="left:1522.6px;top:0;width:1px;height:38px;background:#e0e3eb"></div><div class="a nw" style="left:1429.3px;top:9px;width:93.1px;padding-left:5px;font-size:17.6px;letter-spacing:-0.3px;line-height:22px;overflow:hidden">开单人</div><div class="a" style="left:1617.5px;top:0;width:1px;height:38px;background:#e0e3eb"></div><div class="a nw" style="left:1523.4px;top:9px;width:93.9px;padding-left:5px;font-size:17.6px;letter-spacing:-0.3px;line-height:22px;overflow:hidden">执行人</div><div class="a" style="left:1743.2px;top:0;width:1px;height:38px;background:#e0e3eb"></div><div class="a nw" style="left:1618.3px;top:9px;width:124.7px;padding-left:5px;font-size:17.6px;letter-spacing:-0.3px;line-height:22px;overflow:hidden">开单科室</div><div class="a" style="left:1641px;top:40px;width:9px;height:140px;background:#bfc1c4;border-radius:5px"></div><div class="a" style="left:0;top:732px;width:1385px;height:9px;background:#bfc1c4;border-radius:5px"></div></div><div class="a" style="left:1453.5px;top:501px;width:104.5px;height:416.5px;border:6px solid #f65252;border-radius:3px"></div><div class="a" style="left:1615.7px;top:502.8px;width:113px;height:432px;border:6px solid #f65252;border-radius:3px"></div><div class="a" style="left:0;top:1277px;width:2160px;height:1px;background:#17202b"></div><div class="a" style="left:54px;top:1277px;width:387px;height:1px;background:#b4b4b4"></div>
</body></html>
